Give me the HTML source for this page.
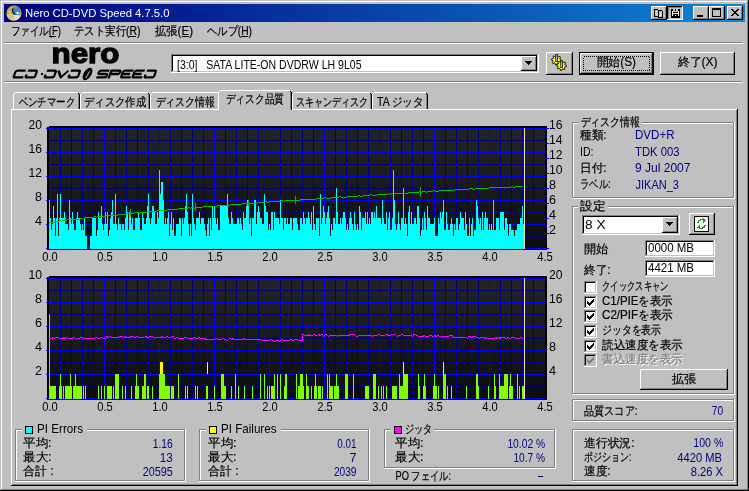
<!DOCTYPE html>
<html><head><meta charset="utf-8"><title>Nero CD-DVD Speed</title>
<style>
html,body{margin:0;padding:0;width:749px;height:491px;overflow:hidden;background:#c0c0c0;}
svg{display:block;font-family:"Liberation Sans",sans-serif;will-change:transform;}
text{white-space:pre;}
</style></head><body>
<svg width="749" height="491" viewBox="0 0 749 491" shape-rendering="crispEdges">
<rect x="0" y="0" width="749" height="491" fill="#c0c0c0"/>
<rect x="0" y="0" width="748" height="1" fill="#c0c0c0"/>
<rect x="0" y="0" width="1" height="490" fill="#c0c0c0"/>
<rect x="0" y="490" width="749" height="1" fill="#000000"/>
<rect x="748" y="0" width="1" height="491" fill="#000000"/>
<rect x="1" y="1" width="746" height="1" fill="#ffffff"/>
<rect x="1" y="1" width="1" height="488" fill="#ffffff"/>
<rect x="1" y="489" width="747" height="1" fill="#808080"/>
<rect x="747" y="1" width="1" height="489" fill="#808080"/>
<defs><linearGradient id="tg" x1="0" x2="1" y1="0" y2="0"><stop offset="0" stop-color="#000080"/><stop offset="1" stop-color="#1084d0"/></linearGradient></defs>
<rect x="4" y="4" width="741" height="18" fill="url(#tg)"/>
<g transform="translate(6,5)" shape-rendering="geometricPrecision"><circle cx="8" cy="8" r="7.6" fill="#c4a464"/><path d="M8 8.5 L0.6 9.5 A7.6 7.6 0 0 0 8 15.6 A7.6 7.6 0 0 0 14.5 11 Z" fill="#e8dcb0"/><path d="M8 8.5 L8 15.6 A7.6 7.6 0 0 1 0.6 9.5 Z" fill="#d8c488"/><circle cx="10.2" cy="6" r="4" fill="#2a88d8"/><path d="M8.2 3.2 Q10.5 2 12.5 3.5 L10 5 Z" fill="#30b030"/><path d="M7 8 Q9 9 11 9" stroke="#30a030" stroke-width="1" fill="none"/><circle cx="11.5" cy="8" r="1.2" fill="#fff"/><path d="M7.3 2.6 Q5.3 6.2 8.6 9.6" stroke="#000" stroke-width="1.1" fill="none"/><rect x="2.6" y="6.4" width="2.2" height="1.3" fill="#f8f800"/><rect x="6.2" y="2.2" width="1.2" height="1.2" fill="#f8f800"/></g>
<text x="25" y="16.5" font-size="11" fill="#ffffff" textLength="144.5" lengthAdjust="spacingAndGlyphs">Nero CD-DVD Speed 4.7.5.0</text>
<rect x="651" y="6" width="16" height="14" fill="#c0c0c0"/>
<rect x="651" y="6" width="15" height="1" fill="#ffffff"/>
<rect x="651" y="6" width="1" height="13" fill="#ffffff"/>
<rect x="651" y="19" width="16" height="1" fill="#000000"/>
<rect x="666" y="6" width="1" height="14" fill="#000000"/>
<rect x="652" y="7" width="13" height="1" fill="#c0c0c0"/>
<rect x="652" y="7" width="1" height="11" fill="#c0c0c0"/>
<rect x="652" y="18" width="14" height="1" fill="#808080"/>
<rect x="665" y="7" width="1" height="12" fill="#808080"/>
<rect x="667" y="6" width="16" height="14" fill="#c0c0c0"/>
<rect x="667" y="6" width="15" height="1" fill="#000000"/>
<rect x="667" y="6" width="1" height="13" fill="#000000"/>
<rect x="667" y="19" width="16" height="1" fill="#ffffff"/>
<rect x="682" y="6" width="1" height="14" fill="#ffffff"/>
<rect x="668" y="7" width="13" height="1" fill="#808080"/>
<rect x="668" y="7" width="1" height="11" fill="#808080"/>
<rect x="668" y="18" width="14" height="1" fill="#c0c0c0"/>
<rect x="681" y="7" width="1" height="12" fill="#c0c0c0"/>
<rect x="693" y="6" width="16" height="14" fill="#c0c0c0"/>
<rect x="693" y="6" width="15" height="1" fill="#ffffff"/>
<rect x="693" y="6" width="1" height="13" fill="#ffffff"/>
<rect x="693" y="19" width="16" height="1" fill="#000000"/>
<rect x="708" y="6" width="1" height="14" fill="#000000"/>
<rect x="694" y="7" width="13" height="1" fill="#c0c0c0"/>
<rect x="694" y="7" width="1" height="11" fill="#c0c0c0"/>
<rect x="694" y="18" width="14" height="1" fill="#808080"/>
<rect x="707" y="7" width="1" height="12" fill="#808080"/>
<rect x="709" y="6" width="16" height="14" fill="#c0c0c0"/>
<rect x="709" y="6" width="15" height="1" fill="#ffffff"/>
<rect x="709" y="6" width="1" height="13" fill="#ffffff"/>
<rect x="709" y="19" width="16" height="1" fill="#000000"/>
<rect x="724" y="6" width="1" height="14" fill="#000000"/>
<rect x="710" y="7" width="13" height="1" fill="#c0c0c0"/>
<rect x="710" y="7" width="1" height="11" fill="#c0c0c0"/>
<rect x="710" y="18" width="14" height="1" fill="#808080"/>
<rect x="723" y="7" width="1" height="12" fill="#808080"/>
<rect x="727" y="6" width="16" height="14" fill="#c0c0c0"/>
<rect x="727" y="6" width="15" height="1" fill="#ffffff"/>
<rect x="727" y="6" width="1" height="13" fill="#ffffff"/>
<rect x="727" y="19" width="16" height="1" fill="#000000"/>
<rect x="742" y="6" width="1" height="14" fill="#000000"/>
<rect x="728" y="7" width="13" height="1" fill="#c0c0c0"/>
<rect x="728" y="7" width="1" height="11" fill="#c0c0c0"/>
<rect x="728" y="18" width="14" height="1" fill="#808080"/>
<rect x="741" y="7" width="1" height="12" fill="#808080"/>
<rect x="697" y="15" width="6" height="2" fill="#000000"/>
<rect x="712" y="8" width="9" height="2" fill="#000000"/>
<rect x="712" y="10" width="1" height="7" fill="#000000"/>
<rect x="720" y="10" width="1" height="7" fill="#000000"/>
<rect x="712" y="16" width="9" height="1" fill="#000000"/>
<rect x="731" y="9" width="1" height="1" fill="#000000"/>
<rect x="732" y="9" width="1" height="1" fill="#000000"/>
<rect x="737" y="9" width="1" height="1" fill="#000000"/>
<rect x="738" y="9" width="1" height="1" fill="#000000"/>
<rect x="732" y="10" width="1" height="1" fill="#000000"/>
<rect x="733" y="10" width="1" height="1" fill="#000000"/>
<rect x="736" y="10" width="1" height="1" fill="#000000"/>
<rect x="737" y="10" width="1" height="1" fill="#000000"/>
<rect x="733" y="11" width="1" height="1" fill="#000000"/>
<rect x="734" y="11" width="1" height="1" fill="#000000"/>
<rect x="735" y="11" width="1" height="1" fill="#000000"/>
<rect x="736" y="11" width="1" height="1" fill="#000000"/>
<rect x="734" y="12" width="1" height="1" fill="#000000"/>
<rect x="735" y="12" width="1" height="1" fill="#000000"/>
<rect x="733" y="13" width="1" height="1" fill="#000000"/>
<rect x="734" y="13" width="1" height="1" fill="#000000"/>
<rect x="735" y="13" width="1" height="1" fill="#000000"/>
<rect x="736" y="13" width="1" height="1" fill="#000000"/>
<rect x="732" y="14" width="1" height="1" fill="#000000"/>
<rect x="733" y="14" width="1" height="1" fill="#000000"/>
<rect x="736" y="14" width="1" height="1" fill="#000000"/>
<rect x="737" y="14" width="1" height="1" fill="#000000"/>
<rect x="731" y="15" width="1" height="1" fill="#000000"/>
<rect x="732" y="15" width="1" height="1" fill="#000000"/>
<rect x="737" y="15" width="1" height="1" fill="#000000"/>
<rect x="738" y="15" width="1" height="1" fill="#000000"/>
<path d="M654.5 9.5h3l1 1v6h-4z" fill="#c0c0c0" stroke="#000" stroke-width="1"/><path d="M658.5 10.5h3l1 1v5.5h-4z" fill="#c0c0c0" stroke="#000" stroke-width="1"/>
<rect x="656" y="11" width="1" height="1" fill="#ffffff"/>
<rect x="656" y="14" width="1" height="1" fill="#ffffff"/>
<rect x="660" y="13" width="1" height="1" fill="#ffffff"/>
<rect x="660" y="15" width="1" height="1" fill="#ffffff"/>
<rect x="671" y="9" width="9" height="9" fill="#000000"/>
<rect x="673" y="9" width="5" height="3" fill="#c0c0c0"/>
<rect x="675" y="9" width="1" height="2" fill="#000000"/>
<rect x="672" y="11" width="1" height="5" fill="#ffffff"/>
<rect x="678" y="11" width="1" height="5" fill="#ffffff"/>
<rect x="673" y="13" width="5" height="1" fill="#ffffff"/>
<rect x="675" y="15" width="1" height="1" fill="#ffffff"/>
<text x="10.5" y="35.4" font-size="12" fill="#000000" stroke="#000000" stroke-width="0.2" textLength="50.5" lengthAdjust="spacingAndGlyphs">ファイル(F)</text>
<text x="74" y="35.4" font-size="12" fill="#000000" stroke="#000000" stroke-width="0.2" textLength="66.5" lengthAdjust="spacingAndGlyphs">テスト実行(R)</text>
<text x="154.5" y="35.4" font-size="12" fill="#000000" stroke="#000000" stroke-width="0.2" textLength="38.5" lengthAdjust="spacingAndGlyphs">拡張(E)</text>
<text x="207" y="35.4" font-size="12" fill="#000000" stroke="#000000" stroke-width="0.2" textLength="45.0" lengthAdjust="spacingAndGlyphs">ヘルプ(H)</text>
<rect x="4" y="42" width="738" height="1" fill="#808080"/>
<rect x="4" y="43" width="739" height="1" fill="#ffffff"/>
<rect x="49" y="36" width="7" height="1" fill="#000000"/>
<rect x="129" y="36" width="7" height="1" fill="#000000"/>
<rect x="182" y="36" width="7" height="1" fill="#000000"/>
<rect x="241" y="36" width="7" height="1" fill="#000000"/>
<rect x="625" y="68" width="7" height="1" fill="#000000"/>
<rect x="706" y="68" width="7" height="1" fill="#000000"/>
<rect x="4" y="81" width="738" height="1" fill="#808080"/>
<rect x="4" y="82" width="739" height="1" fill="#ffffff"/>
<text x="51.5" y="62.6" font-size="28.5" font-weight="bold" font-family="Liberation Sans" fill="#000" stroke="#000" stroke-width="1.3" textLength="68" lengthAdjust="spacingAndGlyphs">nero</text>
<path transform="translate(15.2,69.5) skewX(-20)" d="M11 1.1H2.6Q1.1 1.1 1.1 2.6V6.4Q1.1 7.9 2.6 7.9H11" fill="none" stroke="#000" stroke-width="2.3" stroke-linejoin="round" shape-rendering="geometricPrecision"/>
<path transform="translate(27.2,69.5) skewX(-20)" d="M1.1 1.1H8.9Q10.4 1.1 10.4 2.6V6.4Q10.4 7.9 8.9 7.9H1.1M1.1 5V7.9" fill="none" stroke="#000" stroke-width="2.3" stroke-linejoin="round" shape-rendering="geometricPrecision"/>
<path transform="translate(46.2,69.5) skewX(-20)" d="M1.1 1.1H8.9Q10.4 1.1 10.4 2.6V6.4Q10.4 7.9 8.9 7.9H1.1M1.1 5V7.9" fill="none" stroke="#000" stroke-width="2.3" stroke-linejoin="round" shape-rendering="geometricPrecision"/>
<path transform="translate(58.2,69.5) skewX(-20)" d="M0.6 1.1L5.6 7.9L10.6 1.1" fill="none" stroke="#000" stroke-width="2.3" stroke-linejoin="round" shape-rendering="geometricPrecision"/>
<path transform="translate(70.2,69.5) skewX(-20)" d="M1.1 1.1H8.9Q10.4 1.1 10.4 2.6V6.4Q10.4 7.9 8.9 7.9H1.1M1.1 5V7.9" fill="none" stroke="#000" stroke-width="2.3" stroke-linejoin="round" shape-rendering="geometricPrecision"/>
<path transform="translate(98.7,69.5) skewX(-20)" d="M11 1.1H2.6Q1.1 1.1 1.1 2.6V3Q1.1 4.5 2.6 4.5H8.9Q10.4 4.5 10.4 6V6.4Q10.4 7.9 8.9 7.9H0.5" fill="none" stroke="#000" stroke-width="2.3" stroke-linejoin="round" shape-rendering="geometricPrecision"/>
<path transform="translate(110.7,69.5) skewX(-20)" d="M1.1 9V1.1H8.9Q10.4 1.1 10.4 2.6V3Q10.4 4.5 8.9 4.5H1.1" fill="none" stroke="#000" stroke-width="2.3" stroke-linejoin="round" shape-rendering="geometricPrecision"/>
<path transform="translate(122.7,69.5) skewX(-20)" d="M11 1.1H2.6Q1.1 1.1 1.1 2.6V6.4Q1.1 7.9 2.6 7.9H11M1.1 4.5H9" fill="none" stroke="#000" stroke-width="2.3" stroke-linejoin="round" shape-rendering="geometricPrecision"/>
<path transform="translate(134.2,69.5) skewX(-20)" d="M11 1.1H2.6Q1.1 1.1 1.1 2.6V6.4Q1.1 7.9 2.6 7.9H11M1.1 4.5H9" fill="none" stroke="#000" stroke-width="2.3" stroke-linejoin="round" shape-rendering="geometricPrecision"/>
<path transform="translate(146.2,69.5) skewX(-20)" d="M1.1 1.1H8.9Q10.4 1.1 10.4 2.6V6.4Q10.4 7.9 8.9 7.9H1.1M1.1 5V7.9" fill="none" stroke="#000" stroke-width="2.3" stroke-linejoin="round" shape-rendering="geometricPrecision"/>
<rect x="40.5" y="73" width="2" height="2" fill="#000"/>
<g transform="translate(87.5,74) rotate(-58)" shape-rendering="geometricPrecision"><ellipse cx="0" cy="0" rx="7" ry="3.8" fill="#000"/><path d="M-4.5 0.5H3.5" stroke="#c0c0c0" stroke-width="0.9"/></g>
<rect x="171" y="54" width="368" height="19" fill="#ffffff"/>
<rect x="171" y="54" width="367" height="1" fill="#808080"/>
<rect x="171" y="54" width="1" height="18" fill="#808080"/>
<rect x="171" y="72" width="368" height="1" fill="#ffffff"/>
<rect x="538" y="54" width="1" height="19" fill="#ffffff"/>
<rect x="172" y="55" width="365" height="1" fill="#000000"/>
<rect x="172" y="55" width="1" height="16" fill="#000000"/>
<rect x="172" y="71" width="366" height="1" fill="#c0c0c0"/>
<rect x="537" y="55" width="1" height="17" fill="#c0c0c0"/>
<rect x="521" y="56" width="16" height="15" fill="#c0c0c0"/>
<rect x="521" y="56" width="15" height="1" fill="#ffffff"/>
<rect x="521" y="56" width="1" height="14" fill="#ffffff"/>
<rect x="521" y="70" width="16" height="1" fill="#000000"/>
<rect x="536" y="56" width="1" height="15" fill="#000000"/>
<rect x="522" y="57" width="13" height="1" fill="#c0c0c0"/>
<rect x="522" y="57" width="1" height="12" fill="#c0c0c0"/>
<rect x="522" y="69" width="14" height="1" fill="#808080"/>
<rect x="535" y="57" width="1" height="13" fill="#808080"/>
<rect x="525" y="61" width="7" height="1" fill="#000000"/>
<rect x="526" y="62" width="5" height="1" fill="#000000"/>
<rect x="527" y="63" width="3" height="1" fill="#000000"/>
<rect x="528" y="64" width="1" height="1" fill="#000000"/>
<text x="177" y="69" font-size="12.7" fill="#000000" textLength="184.5" lengthAdjust="spacingAndGlyphs">[3:0]   SATA LITE-ON DVDRW LH 9L05</text>
<rect x="546" y="52" width="27" height="23" fill="#c0c0c0"/>
<rect x="546" y="52" width="26" height="1" fill="#ffffff"/>
<rect x="546" y="52" width="1" height="22" fill="#ffffff"/>
<rect x="546" y="74" width="27" height="1" fill="#000000"/>
<rect x="572" y="52" width="1" height="23" fill="#000000"/>
<rect x="547" y="53" width="24" height="1" fill="#c0c0c0"/>
<rect x="547" y="53" width="1" height="20" fill="#c0c0c0"/>
<rect x="547" y="73" width="25" height="1" fill="#808080"/>
<rect x="571" y="53" width="1" height="21" fill="#808080"/>
<g><polygon points="556.50,55.00 557.48,55.10 557.88,56.67 558.50,57.01 560.04,56.46 560.66,57.22 559.83,58.62 560.03,59.30 561.50,60.00 561.40,60.98 559.83,61.38 559.49,62.00 560.04,63.54 559.28,64.16 557.88,63.33 557.20,63.53 556.50,65.00 555.52,64.90 555.12,63.33 554.50,62.99 552.96,63.54 552.34,62.78 553.17,61.38 552.97,60.70 551.50,60.00 551.60,59.02 553.17,58.62 553.51,58.00 552.96,56.46 553.72,55.84 555.12,56.67 555.80,56.47" fill="#ffff00" stroke="#000" stroke-width="0.9" shape-rendering="geometricPrecision"/><polygon points="561.50,60.50 562.48,60.60 562.88,62.17 563.50,62.51 565.04,61.96 565.66,62.72 564.83,64.12 565.03,64.80 566.50,65.50 566.40,66.48 564.83,66.88 564.49,67.50 565.04,69.04 564.28,69.66 562.88,68.83 562.20,69.03 561.50,70.50 560.52,70.40 560.12,68.83 559.50,68.49 557.96,69.04 557.34,68.28 558.17,66.88 557.97,66.20 556.50,65.50 556.60,64.52 558.17,64.12 558.51,63.50 557.96,61.96 558.72,61.34 560.12,62.17 560.80,61.97" fill="#ffff00" stroke="#000" stroke-width="0.9" shape-rendering="geometricPrecision"/><rect x="555.5" y="54.5" width="2" height="7" fill="#a0a0c0" stroke="#000" stroke-width="0.6"/><rect x="560.5" y="60" width="2" height="7" fill="#a0a0c0" stroke="#000" stroke-width="0.6"/></g>
<rect x="579" y="52" width="75" height="1" fill="#000000"/>
<rect x="579" y="74" width="75" height="1" fill="#000000"/>
<rect x="579" y="52" width="1" height="23" fill="#000000"/>
<rect x="653" y="52" width="1" height="23" fill="#000000"/>
<rect x="580" y="53" width="73" height="21" fill="#c0c0c0"/>
<rect x="580" y="53" width="72" height="1" fill="#ffffff"/>
<rect x="580" y="53" width="1" height="20" fill="#ffffff"/>
<rect x="580" y="73" width="73" height="1" fill="#000000"/>
<rect x="652" y="53" width="1" height="21" fill="#000000"/>
<rect x="581" y="54" width="70" height="1" fill="#c0c0c0"/>
<rect x="581" y="54" width="1" height="18" fill="#c0c0c0"/>
<rect x="581" y="72" width="71" height="1" fill="#808080"/>
<rect x="651" y="54" width="1" height="19" fill="#808080"/>
<rect x="583.5" y="56.5" width="66" height="14" fill="none" stroke="#000" stroke-width="1" stroke-dasharray="1 1"/>
<text x="596.5" y="66.4" font-size="12" fill="#000000" stroke="#000000" stroke-width="0.2" textLength="39.5" lengthAdjust="spacingAndGlyphs">開始(S)</text>
<rect x="660" y="52" width="75" height="23" fill="#c0c0c0"/>
<rect x="660" y="52" width="74" height="1" fill="#ffffff"/>
<rect x="660" y="52" width="1" height="22" fill="#ffffff"/>
<rect x="660" y="74" width="75" height="1" fill="#000000"/>
<rect x="734" y="52" width="1" height="23" fill="#000000"/>
<rect x="661" y="53" width="72" height="1" fill="#c0c0c0"/>
<rect x="661" y="53" width="1" height="20" fill="#c0c0c0"/>
<rect x="661" y="73" width="73" height="1" fill="#808080"/>
<rect x="733" y="53" width="1" height="21" fill="#808080"/>
<text x="677.5" y="66.4" font-size="12" fill="#000000" stroke="#000000" stroke-width="0.2" textLength="40.0" lengthAdjust="spacingAndGlyphs">終了(X)</text>
<rect x="11" y="109" width="726" height="1" fill="#ffffff"/>
<rect x="11" y="109" width="1" height="376" fill="#ffffff"/>
<rect x="736" y="110" width="1" height="375" fill="#808080"/>
<rect x="737" y="109" width="1" height="377" fill="#000000"/>
<rect x="12" y="484" width="725" height="1" fill="#808080"/>
<rect x="11" y="485" width="727" height="1" fill="#000000"/>
<rect x="15" y="92" width="63" height="1" fill="#ffffff"/>
<rect x="14" y="93" width="1" height="1" fill="#ffffff"/>
<rect x="13" y="94" width="1" height="15" fill="#ffffff"/>
<rect x="78" y="93" width="1" height="1" fill="#000000"/>
<rect x="78" y="94" width="1" height="15" fill="#808080"/>
<rect x="79" y="94" width="1" height="15" fill="#000000"/>
<rect x="82" y="92" width="66" height="1" fill="#ffffff"/>
<rect x="81" y="93" width="1" height="1" fill="#ffffff"/>
<rect x="80" y="94" width="1" height="15" fill="#ffffff"/>
<rect x="148" y="93" width="1" height="1" fill="#000000"/>
<rect x="148" y="94" width="1" height="15" fill="#808080"/>
<rect x="149" y="94" width="1" height="15" fill="#000000"/>
<rect x="152" y="92" width="68" height="1" fill="#ffffff"/>
<rect x="151" y="93" width="1" height="1" fill="#ffffff"/>
<rect x="150" y="94" width="1" height="15" fill="#ffffff"/>
<rect x="220" y="93" width="1" height="1" fill="#000000"/>
<rect x="220" y="94" width="1" height="15" fill="#808080"/>
<rect x="221" y="94" width="1" height="15" fill="#000000"/>
<rect x="294" y="92" width="76" height="1" fill="#ffffff"/>
<rect x="293" y="93" width="1" height="1" fill="#ffffff"/>
<rect x="292" y="94" width="1" height="15" fill="#ffffff"/>
<rect x="370" y="93" width="1" height="1" fill="#000000"/>
<rect x="370" y="94" width="1" height="15" fill="#808080"/>
<rect x="371" y="94" width="1" height="15" fill="#000000"/>
<rect x="374" y="92" width="52" height="1" fill="#ffffff"/>
<rect x="373" y="93" width="1" height="1" fill="#ffffff"/>
<rect x="372" y="94" width="1" height="15" fill="#ffffff"/>
<rect x="426" y="93" width="1" height="1" fill="#000000"/>
<rect x="426" y="94" width="1" height="15" fill="#808080"/>
<rect x="427" y="94" width="1" height="15" fill="#000000"/>
<rect x="218" y="90" width="74" height="20" fill="#c0c0c0"/>
<rect x="220" y="90" width="70" height="1" fill="#ffffff"/>
<rect x="219" y="91" width="1" height="1" fill="#ffffff"/>
<rect x="218" y="92" width="1" height="18" fill="#ffffff"/>
<rect x="290" y="91" width="1" height="1" fill="#000000"/>
<rect x="290" y="92" width="1" height="18" fill="#808080"/>
<rect x="291" y="92" width="1" height="18" fill="#000000"/>
<rect x="219" y="109" width="72" height="1" fill="#c0c0c0"/>
<text x="18.5" y="106.4" font-size="12" fill="#000000" stroke="#000000" stroke-width="0.2" textLength="56.5" lengthAdjust="spacingAndGlyphs">ベンチマーク</text>
<text x="84" y="106.4" font-size="12" fill="#000000" stroke="#000000" stroke-width="0.2" textLength="62.0" lengthAdjust="spacingAndGlyphs">ディスク作成</text>
<text x="155.5" y="106.4" font-size="12" fill="#000000" stroke="#000000" stroke-width="0.2" textLength="59.5" lengthAdjust="spacingAndGlyphs">ディスク情報</text>
<text x="225.5" y="103.4" font-size="12" fill="#000000" stroke="#000000" stroke-width="0.2" textLength="58.5" lengthAdjust="spacingAndGlyphs">ディスク品質</text>
<text x="296" y="106.4" font-size="12" fill="#000000" stroke="#000000" stroke-width="0.2" textLength="72.5" lengthAdjust="spacingAndGlyphs">スキャンディスク</text>
<text x="377" y="106.4" font-size="12" fill="#000000" stroke="#000000" stroke-width="0.2" textLength="46.5" lengthAdjust="spacingAndGlyphs">TA ジッタ</text>
<defs><linearGradient id="bg128" gradientUnits="userSpaceOnUse" x1="0" x2="0" y1="128" y2="248"><stop offset="0" stop-color="#242424"/><stop offset="0.5" stop-color="#1a1a1a"/><stop offset="1" stop-color="#0c0c0c"/></linearGradient></defs>
<rect x="47" y="126" width="500" height="124" fill="#000"/>
<rect x="49" y="128" width="496" height="120" fill="url(#bg128)"/>
<rect x="47" y="126" width="2" height="1" fill="#c0c0c0"/>
<rect x="60" y="128" width="1" height="121" fill="#000080"/>
<rect x="71" y="128" width="1" height="121" fill="#000080"/>
<rect x="82" y="128" width="1" height="121" fill="#000080"/>
<rect x="93" y="128" width="1" height="121" fill="#000080"/>
<rect x="104" y="128" width="1" height="121" fill="#0000ff"/>
<rect x="115" y="128" width="1" height="121" fill="#000080"/>
<rect x="126" y="128" width="1" height="121" fill="#000080"/>
<rect x="137" y="128" width="1" height="121" fill="#000080"/>
<rect x="148" y="128" width="1" height="121" fill="#000080"/>
<rect x="159" y="128" width="1" height="121" fill="#0000ff"/>
<rect x="170" y="128" width="1" height="121" fill="#000080"/>
<rect x="181" y="128" width="1" height="121" fill="#000080"/>
<rect x="192" y="128" width="1" height="121" fill="#000080"/>
<rect x="203" y="128" width="1" height="121" fill="#000080"/>
<rect x="214" y="128" width="1" height="121" fill="#0000ff"/>
<rect x="225" y="128" width="1" height="121" fill="#000080"/>
<rect x="236" y="128" width="1" height="121" fill="#000080"/>
<rect x="247" y="128" width="1" height="121" fill="#000080"/>
<rect x="258" y="128" width="1" height="121" fill="#000080"/>
<rect x="269" y="128" width="1" height="121" fill="#0000ff"/>
<rect x="280" y="128" width="1" height="121" fill="#000080"/>
<rect x="291" y="128" width="1" height="121" fill="#000080"/>
<rect x="302" y="128" width="1" height="121" fill="#000080"/>
<rect x="313" y="128" width="1" height="121" fill="#000080"/>
<rect x="324" y="128" width="1" height="121" fill="#0000ff"/>
<rect x="335" y="128" width="1" height="121" fill="#000080"/>
<rect x="346" y="128" width="1" height="121" fill="#000080"/>
<rect x="357" y="128" width="1" height="121" fill="#000080"/>
<rect x="368" y="128" width="1" height="121" fill="#000080"/>
<rect x="379" y="128" width="1" height="121" fill="#0000ff"/>
<rect x="390" y="128" width="1" height="121" fill="#000080"/>
<rect x="401" y="128" width="1" height="121" fill="#000080"/>
<rect x="412" y="128" width="1" height="121" fill="#000080"/>
<rect x="423" y="128" width="1" height="121" fill="#000080"/>
<rect x="434" y="128" width="1" height="121" fill="#0000ff"/>
<rect x="445" y="128" width="1" height="121" fill="#000080"/>
<rect x="456" y="128" width="1" height="121" fill="#000080"/>
<rect x="467" y="128" width="1" height="121" fill="#000080"/>
<rect x="478" y="128" width="1" height="121" fill="#000080"/>
<rect x="489" y="128" width="1" height="121" fill="#0000ff"/>
<rect x="500" y="128" width="1" height="121" fill="#000080"/>
<rect x="511" y="128" width="1" height="121" fill="#000080"/>
<rect x="522" y="128" width="1" height="121" fill="#000080"/>
<rect x="533" y="128" width="1" height="121" fill="#000080"/>
<rect x="46" y="128" width="499" height="1" fill="#0000ff"/>
<rect x="49" y="140" width="496" height="1" fill="#000080"/>
<rect x="46" y="152" width="499" height="1" fill="#0000ff"/>
<rect x="49" y="164" width="496" height="1" fill="#000080"/>
<rect x="46" y="176" width="499" height="1" fill="#0000ff"/>
<rect x="49" y="188" width="496" height="1" fill="#000080"/>
<rect x="46" y="200" width="499" height="1" fill="#0000ff"/>
<rect x="49" y="212" width="496" height="1" fill="#000080"/>
<rect x="46" y="224" width="499" height="1" fill="#0000ff"/>
<rect x="49" y="236" width="496" height="1" fill="#000080"/>
<rect x="46" y="248" width="499" height="1" fill="#0000ff"/>
<path d="M49 200h1v49h-1zM50 218h1v31h-1zM51 230h1v19h-1zM52 224h1v25h-1zM53 206h1v43h-1zM54 218h1v31h-1zM55 236h1v13h-1zM56 218h1v31h-1zM57 194h1v55h-1zM58 236h1v13h-1zM59 218h1v31h-1zM60 194h1v55h-1zM61 218h1v31h-1zM62 218h1v31h-1zM63 218h1v31h-1zM64 212h1v37h-1zM65 224h1v25h-1zM66 224h1v25h-1zM67 224h1v25h-1zM68 230h1v19h-1zM69 200h1v49h-1zM70 218h1v31h-1zM71 224h1v25h-1zM72 212h1v37h-1zM73 224h1v25h-1zM74 230h1v19h-1zM75 230h1v19h-1zM76 218h1v31h-1zM77 212h1v37h-1zM78 218h1v31h-1zM79 218h1v31h-1zM80 224h1v25h-1zM81 230h1v19h-1zM82 224h1v25h-1zM83 230h1v19h-1zM84 218h1v31h-1zM85 236h1v13h-1zM86 236h1v13h-1zM90 236h1v13h-1zM91 236h1v13h-1zM92 218h1v31h-1zM93 218h1v31h-1zM94 218h1v31h-1zM95 218h1v31h-1zM96 236h1v13h-1zM97 230h1v19h-1zM98 212h1v37h-1zM99 218h1v31h-1zM100 218h1v31h-1zM101 206h1v43h-1zM102 224h1v25h-1zM103 230h1v19h-1zM104 224h1v25h-1zM105 212h1v37h-1zM106 224h1v25h-1zM107 212h1v37h-1zM108 236h1v13h-1zM109 230h1v19h-1zM110 218h1v31h-1zM111 212h1v37h-1zM112 200h1v49h-1zM113 224h1v25h-1zM114 224h1v25h-1zM115 194h1v55h-1zM116 224h1v25h-1zM117 230h1v19h-1zM118 218h1v31h-1zM119 224h1v25h-1zM120 224h1v25h-1zM121 230h1v19h-1zM122 224h1v25h-1zM123 224h1v25h-1zM124 230h1v19h-1zM125 218h1v31h-1zM126 206h1v43h-1zM127 212h1v37h-1zM128 230h1v19h-1zM129 212h1v37h-1zM130 212h1v37h-1zM131 224h1v25h-1zM132 218h1v31h-1zM133 230h1v19h-1zM134 230h1v19h-1zM135 218h1v31h-1zM136 218h1v31h-1zM137 218h1v31h-1zM138 212h1v37h-1zM139 218h1v31h-1zM140 230h1v19h-1zM141 230h1v19h-1zM142 212h1v37h-1zM143 218h1v31h-1zM144 224h1v25h-1zM145 224h1v25h-1zM146 218h1v31h-1zM147 206h1v43h-1zM148 194h1v55h-1zM149 218h1v31h-1zM150 224h1v25h-1zM151 218h1v31h-1zM152 206h1v43h-1zM153 206h1v43h-1zM154 212h1v37h-1zM155 224h1v25h-1zM156 224h1v25h-1zM157 212h1v37h-1zM158 218h1v31h-1zM159 170h1v79h-1zM160 194h1v55h-1zM161 182h1v67h-1zM162 182h1v67h-1zM163 200h1v49h-1zM164 224h1v25h-1zM165 218h1v31h-1zM166 224h1v25h-1zM167 218h1v31h-1zM168 212h1v37h-1zM169 236h1v13h-1zM170 224h1v25h-1zM171 212h1v37h-1zM172 230h1v19h-1zM173 218h1v31h-1zM174 236h1v13h-1zM175 236h1v13h-1zM176 224h1v25h-1zM177 224h1v25h-1zM178 224h1v25h-1zM179 218h1v31h-1zM180 218h1v31h-1zM181 236h1v13h-1zM182 218h1v31h-1zM183 224h1v25h-1zM184 218h1v31h-1zM185 206h1v43h-1zM186 194h1v55h-1zM187 212h1v37h-1zM188 224h1v25h-1zM189 236h1v13h-1zM190 224h1v25h-1zM191 236h1v13h-1zM192 194h1v55h-1zM193 218h1v31h-1zM194 224h1v25h-1zM195 230h1v19h-1zM196 218h1v31h-1zM197 218h1v31h-1zM198 218h1v31h-1zM199 212h1v37h-1zM200 224h1v25h-1zM201 218h1v31h-1zM202 218h1v31h-1zM203 218h1v31h-1zM204 224h1v25h-1zM205 230h1v19h-1zM206 236h1v13h-1zM207 224h1v25h-1zM208 218h1v31h-1zM209 236h1v13h-1zM210 218h1v31h-1zM211 230h1v19h-1zM212 206h1v43h-1zM213 218h1v31h-1zM214 206h1v43h-1zM215 218h1v31h-1zM216 224h1v25h-1zM217 218h1v31h-1zM218 230h1v19h-1zM219 230h1v19h-1zM220 206h1v43h-1zM221 206h1v43h-1zM222 206h1v43h-1zM223 206h1v43h-1zM224 206h1v43h-1zM225 206h1v43h-1zM226 206h1v43h-1zM227 194h1v55h-1zM228 218h1v31h-1zM229 224h1v25h-1zM230 224h1v25h-1zM231 212h1v37h-1zM232 218h1v31h-1zM233 224h1v25h-1zM234 224h1v25h-1zM235 224h1v25h-1zM236 224h1v25h-1zM237 218h1v31h-1zM238 218h1v31h-1zM239 224h1v25h-1zM240 218h1v31h-1zM241 224h1v25h-1zM242 230h1v19h-1zM243 212h1v37h-1zM244 218h1v31h-1zM245 218h1v31h-1zM246 206h1v43h-1zM247 200h1v49h-1zM248 206h1v43h-1zM249 224h1v25h-1zM250 218h1v31h-1zM251 236h1v13h-1zM252 218h1v31h-1zM253 218h1v31h-1zM254 200h1v49h-1zM255 200h1v49h-1zM256 224h1v25h-1zM257 212h1v37h-1zM258 206h1v43h-1zM259 212h1v37h-1zM260 218h1v31h-1zM261 218h1v31h-1zM262 224h1v25h-1zM263 224h1v25h-1zM264 194h1v55h-1zM265 206h1v43h-1zM266 212h1v37h-1zM267 212h1v37h-1zM268 230h1v19h-1zM269 224h1v25h-1zM270 230h1v19h-1zM271 212h1v37h-1zM272 212h1v37h-1zM273 230h1v19h-1zM274 212h1v37h-1zM275 218h1v31h-1zM276 218h1v31h-1zM277 218h1v31h-1zM278 218h1v31h-1zM279 224h1v25h-1zM280 200h1v49h-1zM281 218h1v31h-1zM282 218h1v31h-1zM283 230h1v19h-1zM284 218h1v31h-1zM285 218h1v31h-1zM286 224h1v25h-1zM287 218h1v31h-1zM288 224h1v25h-1zM289 224h1v25h-1zM290 218h1v31h-1zM291 218h1v31h-1zM292 230h1v19h-1zM293 218h1v31h-1zM294 218h1v31h-1zM295 218h1v31h-1zM296 218h1v31h-1zM297 224h1v25h-1zM298 230h1v19h-1zM299 230h1v19h-1zM300 218h1v31h-1zM301 218h1v31h-1zM302 224h1v25h-1zM303 212h1v37h-1zM304 218h1v31h-1zM305 224h1v25h-1zM306 218h1v31h-1zM307 218h1v31h-1zM308 212h1v37h-1zM309 218h1v31h-1zM310 224h1v25h-1zM311 212h1v37h-1zM312 230h1v19h-1zM313 206h1v43h-1zM314 224h1v25h-1zM315 230h1v19h-1zM316 218h1v31h-1zM317 218h1v31h-1zM318 218h1v31h-1zM319 236h1v13h-1zM320 194h1v55h-1zM321 224h1v25h-1zM322 218h1v31h-1zM323 206h1v43h-1zM324 212h1v37h-1zM325 224h1v25h-1zM326 218h1v31h-1zM327 212h1v37h-1zM328 206h1v43h-1zM329 218h1v31h-1zM330 236h1v13h-1zM331 224h1v25h-1zM332 230h1v19h-1zM333 218h1v31h-1zM334 218h1v31h-1zM335 224h1v25h-1zM336 188h1v61h-1zM337 212h1v37h-1zM338 224h1v25h-1zM339 224h1v25h-1zM340 218h1v31h-1zM341 224h1v25h-1zM342 218h1v31h-1zM343 212h1v37h-1zM344 212h1v37h-1zM345 218h1v31h-1zM346 230h1v19h-1zM347 224h1v25h-1zM348 230h1v19h-1zM349 218h1v31h-1zM350 212h1v37h-1zM351 218h1v31h-1zM352 224h1v25h-1zM353 230h1v19h-1zM354 212h1v37h-1zM355 224h1v25h-1zM356 230h1v19h-1zM357 224h1v25h-1zM358 230h1v19h-1zM359 206h1v43h-1zM360 212h1v37h-1zM361 230h1v19h-1zM362 218h1v31h-1zM363 218h1v31h-1zM364 218h1v31h-1zM365 212h1v37h-1zM366 224h1v25h-1zM367 212h1v37h-1zM368 224h1v25h-1zM369 218h1v31h-1zM370 224h1v25h-1zM371 212h1v37h-1zM372 212h1v37h-1zM373 218h1v31h-1zM374 212h1v37h-1zM375 218h1v31h-1zM376 206h1v43h-1zM377 218h1v31h-1zM378 218h1v31h-1zM379 218h1v31h-1zM380 218h1v31h-1zM381 224h1v25h-1zM382 200h1v49h-1zM383 218h1v31h-1zM384 224h1v25h-1zM385 224h1v25h-1zM386 212h1v37h-1zM387 230h1v19h-1zM388 218h1v31h-1zM389 212h1v37h-1zM390 230h1v19h-1zM391 230h1v19h-1zM392 218h1v31h-1zM393 170h1v79h-1zM394 200h1v49h-1zM395 224h1v25h-1zM396 230h1v19h-1zM397 224h1v25h-1zM398 212h1v37h-1zM399 224h1v25h-1zM400 230h1v19h-1zM401 218h1v31h-1zM402 218h1v31h-1zM403 188h1v61h-1zM404 224h1v25h-1zM405 218h1v31h-1zM406 224h1v25h-1zM407 236h1v13h-1zM408 212h1v37h-1zM409 206h1v43h-1zM410 224h1v25h-1zM411 212h1v37h-1zM412 224h1v25h-1zM413 224h1v25h-1zM414 218h1v31h-1zM415 218h1v31h-1zM416 224h1v25h-1zM417 206h1v43h-1zM418 206h1v43h-1zM419 218h1v31h-1zM420 236h1v13h-1zM421 230h1v19h-1zM422 218h1v31h-1zM423 230h1v19h-1zM424 212h1v37h-1zM425 218h1v31h-1zM426 230h1v19h-1zM427 206h1v43h-1zM428 218h1v31h-1zM429 218h1v31h-1zM430 224h1v25h-1zM431 224h1v25h-1zM432 224h1v25h-1zM433 224h1v25h-1zM434 218h1v31h-1zM435 236h1v13h-1zM436 236h1v13h-1zM437 236h1v13h-1zM438 218h1v31h-1zM439 224h1v25h-1zM440 212h1v37h-1zM441 218h1v31h-1zM442 212h1v37h-1zM443 200h1v49h-1zM444 230h1v19h-1zM445 230h1v19h-1zM446 212h1v37h-1zM447 224h1v25h-1zM448 230h1v19h-1zM449 230h1v19h-1zM450 224h1v25h-1zM451 218h1v31h-1zM452 224h1v25h-1zM453 236h1v13h-1zM454 224h1v25h-1zM455 230h1v19h-1zM456 218h1v31h-1zM457 218h1v31h-1zM458 230h1v19h-1zM459 224h1v25h-1zM460 212h1v37h-1zM461 218h1v31h-1zM462 218h1v31h-1zM463 218h1v31h-1zM464 230h1v19h-1zM465 212h1v37h-1zM466 224h1v25h-1zM467 236h1v13h-1zM468 236h1v13h-1zM469 218h1v31h-1zM470 236h1v13h-1zM471 224h1v25h-1zM472 218h1v31h-1zM473 236h1v13h-1zM474 230h1v19h-1zM475 230h1v19h-1zM476 200h1v49h-1zM477 206h1v43h-1zM478 218h1v31h-1zM479 224h1v25h-1zM480 218h1v31h-1zM481 230h1v19h-1zM482 212h1v37h-1zM483 230h1v19h-1zM484 218h1v31h-1zM485 212h1v37h-1zM486 218h1v31h-1zM487 218h1v31h-1zM488 230h1v19h-1zM489 224h1v25h-1zM490 230h1v19h-1zM491 224h1v25h-1zM492 230h1v19h-1zM493 200h1v49h-1zM494 230h1v19h-1zM495 230h1v19h-1zM496 218h1v31h-1zM497 218h1v31h-1zM498 218h1v31h-1zM499 230h1v19h-1zM500 212h1v37h-1zM501 212h1v37h-1zM502 212h1v37h-1zM503 212h1v37h-1zM504 230h1v19h-1zM505 218h1v31h-1zM506 218h1v31h-1zM507 224h1v25h-1zM508 236h1v13h-1zM509 224h1v25h-1zM510 224h1v25h-1zM511 230h1v19h-1zM512 230h1v19h-1zM513 230h1v19h-1zM514 236h1v13h-1zM515 230h1v19h-1zM516 230h1v19h-1zM517 224h1v25h-1zM518 224h1v25h-1zM519 224h1v25h-1zM520 218h1v31h-1zM521 218h1v31h-1zM522 206h1v43h-1zM523 224h1v25h-1z" fill="#00ffff"/>
<rect x="47" y="249" width="500" height="1" fill="#000"/>
<rect x="60" y="249" width="1" height="1" fill="#000080"/>
<rect x="71" y="249" width="1" height="1" fill="#000080"/>
<rect x="82" y="249" width="1" height="1" fill="#000080"/>
<rect x="93" y="249" width="1" height="1" fill="#000080"/>
<rect x="104" y="249" width="1" height="1" fill="#0000ff"/>
<rect x="115" y="249" width="1" height="1" fill="#000080"/>
<rect x="126" y="249" width="1" height="1" fill="#000080"/>
<rect x="137" y="249" width="1" height="1" fill="#000080"/>
<rect x="148" y="249" width="1" height="1" fill="#000080"/>
<rect x="159" y="249" width="1" height="1" fill="#0000ff"/>
<rect x="170" y="249" width="1" height="1" fill="#000080"/>
<rect x="181" y="249" width="1" height="1" fill="#000080"/>
<rect x="192" y="249" width="1" height="1" fill="#000080"/>
<rect x="203" y="249" width="1" height="1" fill="#000080"/>
<rect x="214" y="249" width="1" height="1" fill="#0000ff"/>
<rect x="225" y="249" width="1" height="1" fill="#000080"/>
<rect x="236" y="249" width="1" height="1" fill="#000080"/>
<rect x="247" y="249" width="1" height="1" fill="#000080"/>
<rect x="258" y="249" width="1" height="1" fill="#000080"/>
<rect x="269" y="249" width="1" height="1" fill="#0000ff"/>
<rect x="280" y="249" width="1" height="1" fill="#000080"/>
<rect x="291" y="249" width="1" height="1" fill="#000080"/>
<rect x="302" y="249" width="1" height="1" fill="#000080"/>
<rect x="313" y="249" width="1" height="1" fill="#000080"/>
<rect x="324" y="249" width="1" height="1" fill="#0000ff"/>
<rect x="335" y="249" width="1" height="1" fill="#000080"/>
<rect x="346" y="249" width="1" height="1" fill="#000080"/>
<rect x="357" y="249" width="1" height="1" fill="#000080"/>
<rect x="368" y="249" width="1" height="1" fill="#000080"/>
<rect x="379" y="249" width="1" height="1" fill="#0000ff"/>
<rect x="390" y="249" width="1" height="1" fill="#000080"/>
<rect x="401" y="249" width="1" height="1" fill="#000080"/>
<rect x="412" y="249" width="1" height="1" fill="#000080"/>
<rect x="423" y="249" width="1" height="1" fill="#000080"/>
<rect x="434" y="249" width="1" height="1" fill="#0000ff"/>
<rect x="445" y="249" width="1" height="1" fill="#000080"/>
<rect x="456" y="249" width="1" height="1" fill="#000080"/>
<rect x="467" y="249" width="1" height="1" fill="#000080"/>
<rect x="478" y="249" width="1" height="1" fill="#000080"/>
<rect x="489" y="249" width="1" height="1" fill="#0000ff"/>
<rect x="500" y="249" width="1" height="1" fill="#000080"/>
<rect x="511" y="249" width="1" height="1" fill="#000080"/>
<rect x="522" y="249" width="1" height="1" fill="#000080"/>
<rect x="533" y="249" width="1" height="1" fill="#000080"/>
<path d="M49 222 L50 222 L51 222 L52 222 L53 222 L54 222 L55 221 L56 222 L57 221 L58 221 L59 221 L60 220 L61 221 L62 221 L63 220 L64 220 L65 220 L66 220 L67 220 L68 219 L69 219 L70 220 L71 220 L72 219 L73 220 L74 219 L75 219 L76 219 L77 219 L78 219 L79 219 L80 219 L81 218 L82 218 L83 218 L84 218 L85 218 L86 217 L87 217 L88 218 L89 217 L90 217 L91 217 L92 217 L93 217 L94 217 L95 216 L96 217 L97 217 L98 216 L99 216 L100 216 L101 217 L102 216 L103 216 L104 216 L105 216 L106 216 L107 215 L108 216 L109 215 L110 215 L111 215 L112 215 L113 215 L114 215 L115 215 L116 215 L117 215 L118 215 L119 214 L120 214 L121 214 L122 214 L123 214 L124 214 L125 214 L126 213 L127 213 L128 213 L129 213 L130 213 L131 213 L132 213 L133 213 L134 213 L135 212 L136 212 L137 212 L138 212 L139 213 L140 213 L141 212 L142 212 L143 212 L144 212 L145 212 L146 212 L147 212 L148 211 L149 211 L150 211 L151 211 L152 211 L153 211 L154 211 L155 211 L156 211 L157 211 L158 210 L159 210 L160 211 L161 210 L162 210 L163 210 L164 210 L165 210 L166 210 L167 210 L168 209 L169 209 L170 209 L171 210 L172 209 L173 210 L174 209 L175 209 L176 209 L177 209 L178 209 L179 208 L180 208 L181 208 L182 208 L183 208 L184 208 L185 208 L186 208 L187 208 L188 208 L189 207 L190 208 L191 208 L192 207 L193 207 L194 208 L195 208 L196 207 L197 207 L198 207 L199 207 L200 207 L201 207 L202 207 L203 207 L204 206 L205 206 L206 207 L207 206 L208 206 L209 206 L210 206 L211 206 L212 206 L213 206 L214 206 L215 206 L216 206 L217 206 L218 205 L219 205 L220 205 L221 206 L222 205 L223 205 L224 205 L225 205 L226 205 L227 205 L228 205 L229 205 L230 205 L231 204 L232 204 L233 204 L234 204 L235 204 L236 204 L237 204 L238 204 L239 204 L240 204 L241 204 L242 204 L243 203 L244 203 L245 203 L246 203 L247 203 L248 204 L249 203 L250 203 L251 203 L252 203 L253 203 L254 203 L255 203 L256 203 L257 203 L258 202 L259 202 L260 202 L261 202 L262 203 L263 202 L264 202 L265 202 L266 201 L267 202 L268 202 L269 202 L270 201 L271 202 L272 201 L273 201 L274 201 L275 202 L276 201 L277 201 L278 201 L279 201 L280 201 L281 201 L282 200 L283 201 L284 201 L285 200 L286 201 L287 200 L288 200 L289 200 L290 201 L291 200 L292 200 L293 200 L294 200 L295 200 L296 200 L297 200 L298 200 L299 200 L300 200 L301 199 L302 200 L303 199 L304 199 L305 200 L306 199 L307 199 L308 199 L309 199 L310 199 L311 199 L312 199 L313 199 L314 199 L315 199 L316 199 L317 198 L318 198 L319 199 L320 198 L321 198 L322 198 L323 198 L324 198 L325 197 L326 198 L327 198 L328 198 L329 198 L330 198 L331 198 L332 197 L333 197 L334 197 L335 197 L336 197 L337 197 L338 197 L339 197 L340 196 L341 197 L342 197 L343 197 L344 197 L345 197 L346 197 L347 197 L348 196 L349 196 L350 196 L351 196 L352 196 L353 196 L354 196 L355 196 L356 196 L357 196 L358 196 L359 195 L360 196 L361 196 L362 196 L363 196 L364 195 L365 195 L366 195 L367 195 L368 195 L369 195 L370 195 L371 194 L372 195 L373 195 L374 195 L375 195 L376 195 L377 195 L378 194 L379 194 L380 194 L381 195 L382 194 L383 194 L384 194 L385 194 L386 194 L387 194 L388 194 L389 193 L390 194 L391 194 L392 193 L393 193 L394 194 L395 193 L396 193 L397 193 L398 193 L399 193 L400 193 L401 193 L402 193 L403 193 L404 193 L405 193 L406 193 L407 193 L408 193 L409 192 L410 192 L411 192 L412 192 L413 192 L414 192 L415 192 L416 192 L417 192 L418 192 L419 192 L420 191 L421 192 L422 192 L423 191 L424 191 L425 191 L426 192 L427 192 L428 191 L429 192 L430 191 L431 191 L432 191 L433 191 L434 190 L435 191 L436 191 L437 191 L438 191 L439 191 L440 190 L441 190 L442 190 L443 190 L444 190 L445 190 L446 190 L447 190 L448 190 L449 190 L450 190 L451 190 L452 190 L453 190 L454 190 L455 190 L456 189 L457 189 L458 190 L459 189 L460 190 L461 189 L462 190 L463 189 L464 189 L465 189 L466 189 L467 189 L468 189 L469 189 L470 188 L471 189 L472 188 L473 189 L474 189 L475 189 L476 188 L477 188 L478 189 L479 188 L480 188 L481 188 L482 189 L483 188 L484 188 L485 188 L486 188 L487 188 L488 188 L489 188 L490 187 L491 188 L492 187 L493 188 L494 187 L495 187 L496 187 L497 187 L498 188 L499 187 L500 188 L501 187 L502 187 L503 187 L504 187 L505 187 L506 187 L507 187 L508 187 L509 187 L510 187 L511 187 L512 186 L513 187 L514 187 L515 187 L516 186 L517 186 L518 186 L519 186 L520 186 L521 186 L522 186 L523 186" stroke="#00c000" stroke-width="1" fill="none"/>
<rect x="130" y="209" width="1" height="8" fill="#00c000"/>
<rect x="195" y="203" width="1" height="8" fill="#00c000"/>
<rect x="295" y="196" width="1" height="8" fill="#00c000"/>
<rect x="420" y="187" width="1" height="10" fill="#00c000"/>
<rect x="65" y="217" width="1" height="6" fill="#00c000"/>
<rect x="248" y="200" width="1" height="6" fill="#00c000"/>
<rect x="524" y="128" width="1" height="121" fill="#ece0b0"/>
<rect x="545" y="128" width="4" height="1" fill="#0000ff"/>
<rect x="545" y="136" width="2" height="1" fill="#0000ff"/>
<rect x="545" y="143" width="4" height="1" fill="#0000ff"/>
<rect x="545" y="151" width="2" height="1" fill="#0000ff"/>
<rect x="545" y="158" width="4" height="1" fill="#0000ff"/>
<rect x="545" y="166" width="2" height="1" fill="#0000ff"/>
<rect x="545" y="173" width="4" height="1" fill="#0000ff"/>
<rect x="545" y="181" width="2" height="1" fill="#0000ff"/>
<rect x="545" y="188" width="4" height="1" fill="#0000ff"/>
<rect x="545" y="196" width="2" height="1" fill="#0000ff"/>
<rect x="545" y="203" width="4" height="1" fill="#0000ff"/>
<rect x="545" y="211" width="2" height="1" fill="#0000ff"/>
<rect x="545" y="218" width="4" height="1" fill="#0000ff"/>
<rect x="545" y="226" width="2" height="1" fill="#0000ff"/>
<rect x="545" y="233" width="4" height="1" fill="#0000ff"/>
<rect x="545" y="241" width="2" height="1" fill="#0000ff"/>
<rect x="545" y="248" width="4" height="1" fill="#0000ff"/>
<defs><linearGradient id="bg278" gradientUnits="userSpaceOnUse" x1="0" x2="0" y1="278" y2="398"><stop offset="0" stop-color="#242424"/><stop offset="0.5" stop-color="#1a1a1a"/><stop offset="1" stop-color="#0c0c0c"/></linearGradient></defs>
<rect x="47" y="276" width="500" height="124" fill="#000"/>
<rect x="49" y="278" width="496" height="120" fill="url(#bg278)"/>
<rect x="47" y="276" width="2" height="1" fill="#c0c0c0"/>
<rect x="60" y="278" width="1" height="121" fill="#000080"/>
<rect x="71" y="278" width="1" height="121" fill="#000080"/>
<rect x="82" y="278" width="1" height="121" fill="#000080"/>
<rect x="93" y="278" width="1" height="121" fill="#000080"/>
<rect x="104" y="278" width="1" height="121" fill="#0000ff"/>
<rect x="115" y="278" width="1" height="121" fill="#000080"/>
<rect x="126" y="278" width="1" height="121" fill="#000080"/>
<rect x="137" y="278" width="1" height="121" fill="#000080"/>
<rect x="148" y="278" width="1" height="121" fill="#000080"/>
<rect x="159" y="278" width="1" height="121" fill="#0000ff"/>
<rect x="170" y="278" width="1" height="121" fill="#000080"/>
<rect x="181" y="278" width="1" height="121" fill="#000080"/>
<rect x="192" y="278" width="1" height="121" fill="#000080"/>
<rect x="203" y="278" width="1" height="121" fill="#000080"/>
<rect x="214" y="278" width="1" height="121" fill="#0000ff"/>
<rect x="225" y="278" width="1" height="121" fill="#000080"/>
<rect x="236" y="278" width="1" height="121" fill="#000080"/>
<rect x="247" y="278" width="1" height="121" fill="#000080"/>
<rect x="258" y="278" width="1" height="121" fill="#000080"/>
<rect x="269" y="278" width="1" height="121" fill="#0000ff"/>
<rect x="280" y="278" width="1" height="121" fill="#000080"/>
<rect x="291" y="278" width="1" height="121" fill="#000080"/>
<rect x="302" y="278" width="1" height="121" fill="#000080"/>
<rect x="313" y="278" width="1" height="121" fill="#000080"/>
<rect x="324" y="278" width="1" height="121" fill="#0000ff"/>
<rect x="335" y="278" width="1" height="121" fill="#000080"/>
<rect x="346" y="278" width="1" height="121" fill="#000080"/>
<rect x="357" y="278" width="1" height="121" fill="#000080"/>
<rect x="368" y="278" width="1" height="121" fill="#000080"/>
<rect x="379" y="278" width="1" height="121" fill="#0000ff"/>
<rect x="390" y="278" width="1" height="121" fill="#000080"/>
<rect x="401" y="278" width="1" height="121" fill="#000080"/>
<rect x="412" y="278" width="1" height="121" fill="#000080"/>
<rect x="423" y="278" width="1" height="121" fill="#000080"/>
<rect x="434" y="278" width="1" height="121" fill="#0000ff"/>
<rect x="445" y="278" width="1" height="121" fill="#000080"/>
<rect x="456" y="278" width="1" height="121" fill="#000080"/>
<rect x="467" y="278" width="1" height="121" fill="#000080"/>
<rect x="478" y="278" width="1" height="121" fill="#000080"/>
<rect x="489" y="278" width="1" height="121" fill="#0000ff"/>
<rect x="500" y="278" width="1" height="121" fill="#000080"/>
<rect x="511" y="278" width="1" height="121" fill="#000080"/>
<rect x="522" y="278" width="1" height="121" fill="#000080"/>
<rect x="533" y="278" width="1" height="121" fill="#000080"/>
<rect x="46" y="278" width="499" height="1" fill="#0000ff"/>
<rect x="49" y="290" width="496" height="1" fill="#000080"/>
<rect x="46" y="302" width="499" height="1" fill="#0000ff"/>
<rect x="49" y="314" width="496" height="1" fill="#000080"/>
<rect x="46" y="326" width="499" height="1" fill="#0000ff"/>
<rect x="49" y="338" width="496" height="1" fill="#000080"/>
<rect x="46" y="350" width="499" height="1" fill="#0000ff"/>
<rect x="49" y="362" width="496" height="1" fill="#000080"/>
<rect x="46" y="374" width="499" height="1" fill="#0000ff"/>
<rect x="49" y="386" width="496" height="1" fill="#000080"/>
<rect x="46" y="398" width="499" height="1" fill="#0000ff"/>
<path d="M49 386h7v13h-7zM59 386h3v13h-3zM63 386h1v13h-1zM65 386h7v13h-7zM73 386h9v13h-9zM83 386h1v13h-1zM85 386h1v13h-1zM98 386h1v13h-1zM101 386h1v13h-1zM104 386h1v13h-1zM107 386h5v13h-5zM113 386h1v13h-1zM115 386h4v13h-4zM122 386h1v13h-1zM125 386h1v13h-1zM131 386h1v13h-1zM135 386h4v13h-4zM142 386h4v13h-4zM147 386h2v13h-2zM152 386h1v13h-1zM159 386h10v13h-10zM169 386h1v13h-1zM171 386h3v13h-3zM185 386h1v13h-1zM187 386h1v13h-1zM195 386h1v13h-1zM197 386h1v13h-1zM206 386h2v13h-2zM214 386h1v13h-1zM221 386h4v13h-4zM225 386h1v13h-1zM231 386h1v13h-1zM235 386h1v13h-1zM238 386h1v13h-1zM244 386h1v13h-1zM252 386h1v13h-1zM260 386h1v13h-1zM264 386h1v13h-1zM267 386h1v13h-1zM269 386h1v13h-1zM271 386h4v13h-4zM277 386h1v13h-1zM280 386h1v13h-1zM284 386h3v13h-3zM296 386h1v13h-1zM298 386h6v13h-6zM306 386h3v13h-3zM311 386h1v13h-1zM314 386h3v13h-3zM318 386h3v13h-3zM322 386h1v13h-1zM327 386h1v13h-1zM329 386h4v13h-4zM334 386h4v13h-4zM338 386h1v13h-1zM345 386h3v13h-3zM353 386h1v13h-1zM365 386h3v13h-3zM368 386h1v13h-1zM373 386h3v13h-3zM378 386h1v13h-1zM381 386h1v13h-1zM383 386h1v13h-1zM386 386h1v13h-1zM392 386h4v13h-4zM396 386h1v13h-1zM399 386h4v13h-4zM403 386h5v13h-5zM407 386h1v13h-1zM418 386h2v13h-2zM423 386h3v13h-3zM433 386h4v13h-4zM438 386h1v13h-1zM443 386h3v13h-3zM447 386h1v13h-1zM451 386h1v13h-1zM466 386h1v13h-1zM476 386h3v13h-3zM488 386h1v13h-1zM494 386h2v13h-2zM499 386h3v13h-3zM502 386h6v13h-6zM509 386h3v13h-3zM512 386h1v13h-1zM517 386h1v13h-1zM519 386h1v13h-1zM522 386h2v13h-2zM60 374h1v25h-1zM70 374h1v25h-1zM75 374h1v25h-1zM115 374h4v25h-4zM136 374h1v25h-1zM144 374h2v25h-2zM159 374h6v25h-6zM178 374h1v25h-1zM221 374h3v25h-3zM235 374h1v25h-1zM260 374h1v25h-1zM264 374h1v25h-1zM274 374h1v25h-1zM277 374h1v25h-1zM280 374h1v25h-1zM285 374h2v25h-2zM296 374h1v25h-1zM300 374h3v25h-3zM306 374h1v25h-1zM315 374h1v25h-1zM327 374h1v25h-1zM329 374h1v25h-1zM336 374h1v25h-1zM345 374h3v25h-3zM353 374h1v25h-1zM373 374h3v25h-3zM399 374h1v25h-1zM403 374h5v25h-5zM407 374h1v25h-1zM418 374h1v25h-1zM424 374h1v25h-1zM434 374h1v25h-1zM443 374h3v25h-3zM476 374h2v25h-2zM494 374h1v25h-1zM499 374h1v25h-1zM504 374h4v25h-4zM510 374h1v25h-1zM517 374h1v25h-1z" fill="#80ff00"/>
<path d="M160 362h3v12h-3zM207 362h1v12h-1zM403 362h1v12h-1zM443 362h1v12h-1z" fill="#ffff00"/>
<rect x="49" y="314" width="1" height="84" fill="#d0b070"/>
<path d="M49 339 L50 338 L51 338 L52 339 L53 337 L54 338 L55 338 L56 337 L57 338 L58 337 L59 338 L60 338 L61 338 L62 338 L63 339 L64 337 L65 339 L66 338 L67 337 L68 338 L69 338 L70 338 L71 338 L72 338 L73 338 L74 337 L75 338 L76 339 L77 339 L78 338 L79 338 L80 338 L81 337 L82 337 L83 338 L84 338 L85 338 L86 338 L87 338 L88 338 L89 338 L90 339 L91 338 L92 338 L93 338 L94 338 L95 338 L96 337 L97 338 L98 338 L99 338 L100 338 L101 338 L102 337 L103 338 L104 338 L105 338 L106 338 L107 336 L108 338 L109 337 L110 336 L111 337 L112 337 L113 337 L114 337 L115 337 L116 337 L117 337 L118 337 L119 337 L120 336 L121 337 L122 336 L123 337 L124 337 L125 336 L126 338 L127 337 L128 337 L129 337 L130 338 L131 336 L132 337 L133 336 L134 337 L135 338 L136 337 L137 336 L138 337 L139 337 L140 337 L141 338 L142 337 L143 338 L144 337 L145 337 L146 336 L147 338 L148 337 L149 337 L150 336 L151 337 L152 336 L153 337 L154 337 L155 338 L156 338 L157 337 L158 337 L159 337 L160 337 L161 338 L162 336 L163 337 L164 337 L165 337 L166 337 L167 336 L168 337 L169 337 L170 337 L171 337 L172 336 L173 336 L174 338 L175 338 L176 338 L177 337 L178 338 L179 339 L180 338 L181 338 L182 338 L183 338 L184 338 L185 337 L186 337 L187 338 L188 338 L189 338 L190 338 L191 339 L192 338 L193 338 L194 337 L195 338 L196 338 L197 338 L198 338 L199 337 L200 338 L201 338 L202 338 L203 338 L204 339 L205 338 L206 340 L207 339 L208 339 L209 339 L210 339 L211 339 L212 339 L213 339 L214 339 L215 339 L216 338 L217 339 L218 340 L219 339 L220 339 L221 339 L222 339 L223 338 L224 339 L225 339 L226 340 L227 340 L228 340 L229 339 L230 338 L231 339 L232 340 L233 338 L234 339 L235 339 L236 340 L237 339 L238 339 L239 339 L240 339 L241 339 L242 339 L243 340 L244 338 L245 339 L246 340 L247 339 L248 339 L249 339 L250 339 L251 339 L252 340 L253 339 L254 339 L255 339 L256 339 L257 339 L258 339 L259 339 L260 339 L261 340 L262 340 L263 341 L264 340 L265 341 L266 340 L267 340 L268 340 L269 340 L270 340 L271 339 L272 340 L273 340 L274 341 L275 341 L276 341 L277 340 L278 340 L279 341 L280 341 L281 340 L282 339 L283 340 L284 340 L285 341 L286 340 L287 341 L288 340 L289 340 L290 340 L291 339 L292 340 L293 340 L294 340 L295 339 L296 340 L297 339 L298 340 L299 340 L300 340 L301 340 L302 341 L303 334 L304 335 L305 335 L306 335 L307 335 L308 336 L309 334 L310 336 L311 335 L312 335 L313 335 L314 334 L315 335 L316 335 L317 335 L318 335 L319 334 L320 336 L321 335 L322 334 L323 336 L324 336 L325 335 L326 334 L327 335 L328 336 L329 336 L330 335 L331 336 L332 335 L333 335 L334 335 L335 335 L336 335 L337 336 L338 336 L339 335 L340 335 L341 335 L342 335 L343 336 L344 335 L345 336 L346 335 L347 335 L348 335 L349 336 L350 334 L351 335 L352 334 L353 335 L354 334 L355 335 L356 336 L357 336 L358 336 L359 335 L360 335 L361 336 L362 335 L363 335 L364 335 L365 335 L366 335 L367 335 L368 335 L369 335 L370 335 L371 335 L372 336 L373 336 L374 335 L375 335 L376 335 L377 335 L378 335 L379 334 L380 335 L381 335 L382 335 L383 335 L384 335 L385 335 L386 334 L387 334 L388 336 L389 335 L390 335 L391 335 L392 334 L393 335 L394 335 L395 334 L396 335 L397 336 L398 336 L399 335 L400 335 L401 335 L402 334 L403 335 L404 335 L405 335 L406 335 L407 335 L408 335 L409 335 L410 336 L411 335 L412 336 L413 336 L414 334 L415 334 L416 335 L417 335 L418 336 L419 337 L420 336 L421 337 L422 336 L423 337 L424 335 L425 336 L426 336 L427 336 L428 337 L429 336 L430 335 L431 335 L432 336 L433 337 L434 336 L435 335 L436 337 L437 336 L438 335 L439 336 L440 336 L441 337 L442 337 L443 336 L444 336 L445 336 L446 336 L447 336 L448 336 L449 336 L450 335 L451 336 L452 335 L453 337 L454 338 L455 337 L456 337 L457 337 L458 337 L459 337 L460 337 L461 338 L462 337 L463 337 L464 338 L465 337 L466 337 L467 338 L468 338 L469 336 L470 336 L471 337 L472 337 L473 336 L474 336 L475 336 L476 337 L477 337 L478 337 L479 338 L480 338 L481 337 L482 337 L483 337 L484 338 L485 339 L486 337 L487 338 L488 338 L489 338 L490 338 L491 338 L492 339 L493 338 L494 338 L495 338 L496 337 L497 339 L498 338 L499 337 L500 339 L501 337 L502 338 L503 337 L504 338 L505 337 L506 339 L507 339 L508 337 L509 338 L510 339 L511 338 L512 337 L513 338 L514 337 L515 338 L516 339 L517 338 L518 338 L519 338 L520 338 L521 337 L522 338 L523 338" stroke="#ff00ff" stroke-width="1" fill="none"/>
<rect x="524" y="278" width="1" height="121" fill="#ece0b0"/>
<rect x="47" y="399" width="500" height="1" fill="#000"/>
<rect x="60" y="399" width="1" height="1" fill="#000080"/>
<rect x="71" y="399" width="1" height="1" fill="#000080"/>
<rect x="82" y="399" width="1" height="1" fill="#000080"/>
<rect x="93" y="399" width="1" height="1" fill="#000080"/>
<rect x="104" y="399" width="1" height="1" fill="#0000ff"/>
<rect x="115" y="399" width="1" height="1" fill="#000080"/>
<rect x="126" y="399" width="1" height="1" fill="#000080"/>
<rect x="137" y="399" width="1" height="1" fill="#000080"/>
<rect x="148" y="399" width="1" height="1" fill="#000080"/>
<rect x="159" y="399" width="1" height="1" fill="#0000ff"/>
<rect x="170" y="399" width="1" height="1" fill="#000080"/>
<rect x="181" y="399" width="1" height="1" fill="#000080"/>
<rect x="192" y="399" width="1" height="1" fill="#000080"/>
<rect x="203" y="399" width="1" height="1" fill="#000080"/>
<rect x="214" y="399" width="1" height="1" fill="#0000ff"/>
<rect x="225" y="399" width="1" height="1" fill="#000080"/>
<rect x="236" y="399" width="1" height="1" fill="#000080"/>
<rect x="247" y="399" width="1" height="1" fill="#000080"/>
<rect x="258" y="399" width="1" height="1" fill="#000080"/>
<rect x="269" y="399" width="1" height="1" fill="#0000ff"/>
<rect x="280" y="399" width="1" height="1" fill="#000080"/>
<rect x="291" y="399" width="1" height="1" fill="#000080"/>
<rect x="302" y="399" width="1" height="1" fill="#000080"/>
<rect x="313" y="399" width="1" height="1" fill="#000080"/>
<rect x="324" y="399" width="1" height="1" fill="#0000ff"/>
<rect x="335" y="399" width="1" height="1" fill="#000080"/>
<rect x="346" y="399" width="1" height="1" fill="#000080"/>
<rect x="357" y="399" width="1" height="1" fill="#000080"/>
<rect x="368" y="399" width="1" height="1" fill="#000080"/>
<rect x="379" y="399" width="1" height="1" fill="#0000ff"/>
<rect x="390" y="399" width="1" height="1" fill="#000080"/>
<rect x="401" y="399" width="1" height="1" fill="#000080"/>
<rect x="412" y="399" width="1" height="1" fill="#000080"/>
<rect x="423" y="399" width="1" height="1" fill="#000080"/>
<rect x="434" y="399" width="1" height="1" fill="#0000ff"/>
<rect x="445" y="399" width="1" height="1" fill="#000080"/>
<rect x="456" y="399" width="1" height="1" fill="#000080"/>
<rect x="467" y="399" width="1" height="1" fill="#000080"/>
<rect x="478" y="399" width="1" height="1" fill="#000080"/>
<rect x="489" y="399" width="1" height="1" fill="#0000ff"/>
<rect x="500" y="399" width="1" height="1" fill="#000080"/>
<rect x="511" y="399" width="1" height="1" fill="#000080"/>
<rect x="522" y="399" width="1" height="1" fill="#000080"/>
<rect x="533" y="399" width="1" height="1" fill="#000080"/>
<text x="42" y="129" font-size="12.6" text-anchor="end" textLength="13.5" lengthAdjust="spacingAndGlyphs">20</text>
<text x="42" y="153" font-size="12.6" text-anchor="end" textLength="13.5" lengthAdjust="spacingAndGlyphs">16</text>
<text x="42" y="177" font-size="12.6" text-anchor="end" textLength="13.5" lengthAdjust="spacingAndGlyphs">12</text>
<text x="42" y="201" font-size="12.6" text-anchor="end">8</text>
<text x="42" y="225" font-size="12.6" text-anchor="end">4</text>
<text x="42" y="279" font-size="12.6" text-anchor="end" textLength="13.5" lengthAdjust="spacingAndGlyphs">10</text>
<text x="42" y="303" font-size="12.6" text-anchor="end">8</text>
<text x="42" y="327" font-size="12.6" text-anchor="end">6</text>
<text x="42" y="351" font-size="12.6" text-anchor="end">4</text>
<text x="42" y="375" font-size="12.6" text-anchor="end">2</text>
<text x="549" y="129" font-size="12.6" textLength="13.5" lengthAdjust="spacingAndGlyphs">16</text>
<text x="549" y="144" font-size="12.6" textLength="13.5" lengthAdjust="spacingAndGlyphs">14</text>
<text x="549" y="159" font-size="12.6" textLength="13.5" lengthAdjust="spacingAndGlyphs">12</text>
<text x="549" y="174" font-size="12.6" textLength="13.5" lengthAdjust="spacingAndGlyphs">10</text>
<text x="549" y="189" font-size="12.6">8</text>
<text x="549" y="204" font-size="12.6">6</text>
<text x="549" y="219" font-size="12.6">4</text>
<text x="549" y="234" font-size="12.6">2</text>
<text x="549" y="279" font-size="12.6" textLength="13.5" lengthAdjust="spacingAndGlyphs">20</text>
<text x="549" y="303" font-size="12.6" textLength="13.5" lengthAdjust="spacingAndGlyphs">16</text>
<text x="549" y="327" font-size="12.6" textLength="13.5" lengthAdjust="spacingAndGlyphs">12</text>
<text x="549" y="351" font-size="12.6">8</text>
<text x="549" y="375" font-size="12.6">4</text>
<text x="50.0" y="261" font-size="12.6" text-anchor="middle" textLength="15.5" lengthAdjust="spacingAndGlyphs">0.0</text>
<text x="50.0" y="411" font-size="12.6" text-anchor="middle" textLength="15.5" lengthAdjust="spacingAndGlyphs">0.0</text>
<text x="105.0" y="261" font-size="12.6" text-anchor="middle" textLength="15.5" lengthAdjust="spacingAndGlyphs">0.5</text>
<text x="105.0" y="411" font-size="12.6" text-anchor="middle" textLength="15.5" lengthAdjust="spacingAndGlyphs">0.5</text>
<text x="160.0" y="261" font-size="12.6" text-anchor="middle" textLength="15.5" lengthAdjust="spacingAndGlyphs">1.0</text>
<text x="160.0" y="411" font-size="12.6" text-anchor="middle" textLength="15.5" lengthAdjust="spacingAndGlyphs">1.0</text>
<text x="215.0" y="261" font-size="12.6" text-anchor="middle" textLength="15.5" lengthAdjust="spacingAndGlyphs">1.5</text>
<text x="215.0" y="411" font-size="12.6" text-anchor="middle" textLength="15.5" lengthAdjust="spacingAndGlyphs">1.5</text>
<text x="270.0" y="261" font-size="12.6" text-anchor="middle" textLength="15.5" lengthAdjust="spacingAndGlyphs">2.0</text>
<text x="270.0" y="411" font-size="12.6" text-anchor="middle" textLength="15.5" lengthAdjust="spacingAndGlyphs">2.0</text>
<text x="325.0" y="261" font-size="12.6" text-anchor="middle" textLength="15.5" lengthAdjust="spacingAndGlyphs">2.5</text>
<text x="325.0" y="411" font-size="12.6" text-anchor="middle" textLength="15.5" lengthAdjust="spacingAndGlyphs">2.5</text>
<text x="380.0" y="261" font-size="12.6" text-anchor="middle" textLength="15.5" lengthAdjust="spacingAndGlyphs">3.0</text>
<text x="380.0" y="411" font-size="12.6" text-anchor="middle" textLength="15.5" lengthAdjust="spacingAndGlyphs">3.0</text>
<text x="435.0" y="261" font-size="12.6" text-anchor="middle" textLength="15.5" lengthAdjust="spacingAndGlyphs">3.5</text>
<text x="435.0" y="411" font-size="12.6" text-anchor="middle" textLength="15.5" lengthAdjust="spacingAndGlyphs">3.5</text>
<text x="490.0" y="261" font-size="12.6" text-anchor="middle" textLength="15.5" lengthAdjust="spacingAndGlyphs">4.0</text>
<text x="490.0" y="411" font-size="12.6" text-anchor="middle" textLength="15.5" lengthAdjust="spacingAndGlyphs">4.0</text>
<text x="545.0" y="261" font-size="12.6" text-anchor="middle" textLength="15.5" lengthAdjust="spacingAndGlyphs">4.5</text>
<text x="545.0" y="411" font-size="12.6" text-anchor="middle" textLength="15.5" lengthAdjust="spacingAndGlyphs">4.5</text>
<rect x="572" y="122" width="162" height="1" fill="#808080"/>
<rect x="572" y="122" width="1" height="76" fill="#808080"/>
<rect x="572" y="197" width="162" height="1" fill="#808080"/>
<rect x="733" y="122" width="1" height="76" fill="#808080"/>
<rect x="573" y="123" width="162" height="1" fill="#ffffff"/>
<rect x="573" y="123" width="1" height="76" fill="#ffffff"/>
<rect x="572" y="198" width="163" height="1" fill="#ffffff"/>
<rect x="734" y="122" width="1" height="77" fill="#ffffff"/>
<rect x="573" y="197" width="160" height="1" fill="#808080"/>
<rect x="733" y="123" width="1" height="75" fill="#808080"/>
<rect x="578" y="122" width="64" height="2" fill="#c0c0c0"/>
<text x="580.5" y="126.4" font-size="12" fill="#000000" stroke="#000000" stroke-width="0.2" textLength="59.5" lengthAdjust="spacingAndGlyphs">ディスク情報</text>
<text x="580" y="138.9" font-size="12" fill="#000000" stroke="#000000" stroke-width="0.2" textLength="26.5" lengthAdjust="spacingAndGlyphs">種類:</text>
<text x="580" y="156" font-size="12.7" fill="#000000" textLength="13.5" lengthAdjust="spacingAndGlyphs">ID:</text>
<text x="580" y="171.9" font-size="12" fill="#000000" stroke="#000000" stroke-width="0.2" textLength="26.5" lengthAdjust="spacingAndGlyphs">日付:</text>
<text x="580" y="188.4" font-size="12" fill="#000000" stroke="#000000" stroke-width="0.2" textLength="30.5" lengthAdjust="spacingAndGlyphs">ラベル:</text>
<text x="635" y="139" font-size="12.7" fill="#000080" textLength="39.5" lengthAdjust="spacingAndGlyphs">DVD+R</text>
<text x="635" y="156" font-size="12.7" fill="#000080" textLength="44.5" lengthAdjust="spacingAndGlyphs">TDK 003</text>
<text x="635" y="172" font-size="12.7" fill="#000080" textLength="55.5" lengthAdjust="spacingAndGlyphs">9 Jul 2007</text>
<text x="635.5" y="189" font-size="12.7" fill="#000080" textLength="43.5" lengthAdjust="spacingAndGlyphs">JIKAN_3</text>
<rect x="572" y="206" width="162" height="1" fill="#808080"/>
<rect x="572" y="206" width="1" height="188" fill="#808080"/>
<rect x="572" y="393" width="162" height="1" fill="#808080"/>
<rect x="733" y="206" width="1" height="188" fill="#808080"/>
<rect x="573" y="207" width="162" height="1" fill="#ffffff"/>
<rect x="573" y="207" width="1" height="188" fill="#ffffff"/>
<rect x="572" y="394" width="163" height="1" fill="#ffffff"/>
<rect x="734" y="206" width="1" height="189" fill="#ffffff"/>
<rect x="573" y="393" width="160" height="1" fill="#808080"/>
<rect x="733" y="207" width="1" height="187" fill="#808080"/>
<rect x="578" y="206" width="30" height="2" fill="#c0c0c0"/>
<text x="580" y="210.4" font-size="12" fill="#000000" stroke="#000000" stroke-width="0.2" textLength="25.5" lengthAdjust="spacingAndGlyphs">設定</text>
<rect x="582" y="215" width="98" height="20" fill="#ffffff"/>
<rect x="582" y="215" width="97" height="1" fill="#808080"/>
<rect x="582" y="215" width="1" height="19" fill="#808080"/>
<rect x="582" y="234" width="98" height="1" fill="#ffffff"/>
<rect x="679" y="215" width="1" height="20" fill="#ffffff"/>
<rect x="583" y="216" width="95" height="1" fill="#000000"/>
<rect x="583" y="216" width="1" height="17" fill="#000000"/>
<rect x="583" y="233" width="96" height="1" fill="#c0c0c0"/>
<rect x="678" y="216" width="1" height="18" fill="#c0c0c0"/>
<rect x="662" y="217" width="16" height="16" fill="#c0c0c0"/>
<rect x="662" y="217" width="15" height="1" fill="#ffffff"/>
<rect x="662" y="217" width="1" height="15" fill="#ffffff"/>
<rect x="662" y="232" width="16" height="1" fill="#000000"/>
<rect x="677" y="217" width="1" height="16" fill="#000000"/>
<rect x="663" y="218" width="13" height="1" fill="#c0c0c0"/>
<rect x="663" y="218" width="1" height="13" fill="#c0c0c0"/>
<rect x="663" y="231" width="14" height="1" fill="#808080"/>
<rect x="676" y="218" width="1" height="14" fill="#808080"/>
<rect x="666" y="222" width="7" height="1" fill="#000000"/>
<rect x="667" y="223" width="5" height="1" fill="#000000"/>
<rect x="668" y="224" width="3" height="1" fill="#000000"/>
<rect x="669" y="225" width="1" height="1" fill="#000000"/>
<text x="585" y="228.5" font-size="12.7" fill="#000000" textLength="20.5" lengthAdjust="spacingAndGlyphs">8 X</text>
<rect x="689" y="213" width="26" height="22" fill="#c0c0c0"/>
<rect x="689" y="213" width="25" height="1" fill="#ffffff"/>
<rect x="689" y="213" width="1" height="21" fill="#ffffff"/>
<rect x="689" y="234" width="26" height="1" fill="#000000"/>
<rect x="714" y="213" width="1" height="22" fill="#000000"/>
<rect x="690" y="214" width="23" height="1" fill="#c0c0c0"/>
<rect x="690" y="214" width="1" height="19" fill="#c0c0c0"/>
<rect x="690" y="233" width="24" height="1" fill="#808080"/>
<rect x="713" y="214" width="1" height="20" fill="#808080"/>
<g transform="translate(694,216)"><rect x="0.5" y="0.5" width="14" height="15" fill="#fff" stroke="#000"/><path d="M4 7 A4 4 0 0 1 11 5 M11 9 A4 4 0 0 1 4 11" stroke="#18a018" stroke-width="1.6" fill="none"/><path d="M9 2l3 3-3 2z M6 14l-3-3 3-2z" fill="#18a018"/></g>
<text x="584" y="252.9" font-size="12" fill="#000000" stroke="#000000" stroke-width="0.2" textLength="24.5" lengthAdjust="spacingAndGlyphs">開始</text>
<rect x="645" y="240" width="70" height="17" fill="#ffffff"/>
<rect x="645" y="240" width="69" height="1" fill="#808080"/>
<rect x="645" y="240" width="1" height="16" fill="#808080"/>
<rect x="645" y="256" width="70" height="1" fill="#ffffff"/>
<rect x="714" y="240" width="1" height="17" fill="#ffffff"/>
<rect x="646" y="241" width="67" height="1" fill="#000000"/>
<rect x="646" y="241" width="1" height="14" fill="#000000"/>
<rect x="646" y="255" width="68" height="1" fill="#c0c0c0"/>
<rect x="713" y="241" width="1" height="15" fill="#c0c0c0"/>
<text x="648" y="251.5" font-size="12.7" fill="#000000" textLength="46.0" lengthAdjust="spacingAndGlyphs">0000 MB</text>
<text x="584" y="273.9" font-size="12" fill="#000000" stroke="#000000" stroke-width="0.2" textLength="26.5" lengthAdjust="spacingAndGlyphs">終了:</text>
<rect x="645" y="260" width="70" height="17" fill="#ffffff"/>
<rect x="645" y="260" width="69" height="1" fill="#808080"/>
<rect x="645" y="260" width="1" height="16" fill="#808080"/>
<rect x="645" y="276" width="70" height="1" fill="#ffffff"/>
<rect x="714" y="260" width="1" height="17" fill="#ffffff"/>
<rect x="646" y="261" width="67" height="1" fill="#000000"/>
<rect x="646" y="261" width="1" height="14" fill="#000000"/>
<rect x="646" y="275" width="68" height="1" fill="#c0c0c0"/>
<rect x="713" y="261" width="1" height="15" fill="#c0c0c0"/>
<text x="648" y="272" font-size="12.7" fill="#000000" textLength="46.0" lengthAdjust="spacingAndGlyphs">4421 MB</text>
<rect x="584" y="281" width="13" height="13" fill="#ffffff"/>
<rect x="584" y="281" width="12" height="1" fill="#808080"/>
<rect x="584" y="281" width="1" height="12" fill="#808080"/>
<rect x="584" y="293" width="13" height="1" fill="#ffffff"/>
<rect x="596" y="281" width="1" height="13" fill="#ffffff"/>
<rect x="585" y="282" width="10" height="1" fill="#000000"/>
<rect x="585" y="282" width="1" height="10" fill="#000000"/>
<rect x="585" y="292" width="11" height="1" fill="#c0c0c0"/>
<rect x="595" y="282" width="1" height="11" fill="#c0c0c0"/>
<text x="602" y="290.4" font-size="12" fill="#000000" stroke="#000000" stroke-width="0.2" textLength="66.5" lengthAdjust="spacingAndGlyphs">クイックスキャン</text>
<rect x="584" y="296" width="13" height="13" fill="#ffffff"/>
<rect x="584" y="296" width="12" height="1" fill="#808080"/>
<rect x="584" y="296" width="1" height="12" fill="#808080"/>
<rect x="584" y="308" width="13" height="1" fill="#ffffff"/>
<rect x="596" y="296" width="1" height="13" fill="#ffffff"/>
<rect x="585" y="297" width="10" height="1" fill="#000000"/>
<rect x="585" y="297" width="1" height="10" fill="#000000"/>
<rect x="585" y="307" width="11" height="1" fill="#c0c0c0"/>
<rect x="595" y="297" width="1" height="11" fill="#c0c0c0"/>
<rect x="593" y="299" width="1" height="1" fill="#000000"/>
<rect x="592" y="300" width="1" height="1" fill="#000000"/>
<rect x="593" y="300" width="1" height="1" fill="#000000"/>
<rect x="587" y="301" width="1" height="1" fill="#000000"/>
<rect x="591" y="301" width="1" height="1" fill="#000000"/>
<rect x="592" y="301" width="1" height="1" fill="#000000"/>
<rect x="593" y="301" width="1" height="1" fill="#000000"/>
<rect x="587" y="302" width="1" height="1" fill="#000000"/>
<rect x="588" y="302" width="1" height="1" fill="#000000"/>
<rect x="590" y="302" width="1" height="1" fill="#000000"/>
<rect x="591" y="302" width="1" height="1" fill="#000000"/>
<rect x="592" y="302" width="1" height="1" fill="#000000"/>
<rect x="587" y="303" width="1" height="1" fill="#000000"/>
<rect x="588" y="303" width="1" height="1" fill="#000000"/>
<rect x="589" y="303" width="1" height="1" fill="#000000"/>
<rect x="590" y="303" width="1" height="1" fill="#000000"/>
<rect x="591" y="303" width="1" height="1" fill="#000000"/>
<rect x="588" y="304" width="1" height="1" fill="#000000"/>
<rect x="589" y="304" width="1" height="1" fill="#000000"/>
<rect x="590" y="304" width="1" height="1" fill="#000000"/>
<rect x="589" y="305" width="1" height="1" fill="#000000"/>
<text x="602" y="305.4" font-size="12" fill="#000000" stroke="#000000" stroke-width="0.2" textLength="71.0" lengthAdjust="spacingAndGlyphs">C1/PIEを表示</text>
<rect x="584" y="310" width="13" height="13" fill="#ffffff"/>
<rect x="584" y="310" width="12" height="1" fill="#808080"/>
<rect x="584" y="310" width="1" height="12" fill="#808080"/>
<rect x="584" y="322" width="13" height="1" fill="#ffffff"/>
<rect x="596" y="310" width="1" height="13" fill="#ffffff"/>
<rect x="585" y="311" width="10" height="1" fill="#000000"/>
<rect x="585" y="311" width="1" height="10" fill="#000000"/>
<rect x="585" y="321" width="11" height="1" fill="#c0c0c0"/>
<rect x="595" y="311" width="1" height="11" fill="#c0c0c0"/>
<rect x="593" y="313" width="1" height="1" fill="#000000"/>
<rect x="592" y="314" width="1" height="1" fill="#000000"/>
<rect x="593" y="314" width="1" height="1" fill="#000000"/>
<rect x="587" y="315" width="1" height="1" fill="#000000"/>
<rect x="591" y="315" width="1" height="1" fill="#000000"/>
<rect x="592" y="315" width="1" height="1" fill="#000000"/>
<rect x="593" y="315" width="1" height="1" fill="#000000"/>
<rect x="587" y="316" width="1" height="1" fill="#000000"/>
<rect x="588" y="316" width="1" height="1" fill="#000000"/>
<rect x="590" y="316" width="1" height="1" fill="#000000"/>
<rect x="591" y="316" width="1" height="1" fill="#000000"/>
<rect x="592" y="316" width="1" height="1" fill="#000000"/>
<rect x="587" y="317" width="1" height="1" fill="#000000"/>
<rect x="588" y="317" width="1" height="1" fill="#000000"/>
<rect x="589" y="317" width="1" height="1" fill="#000000"/>
<rect x="590" y="317" width="1" height="1" fill="#000000"/>
<rect x="591" y="317" width="1" height="1" fill="#000000"/>
<rect x="588" y="318" width="1" height="1" fill="#000000"/>
<rect x="589" y="318" width="1" height="1" fill="#000000"/>
<rect x="590" y="318" width="1" height="1" fill="#000000"/>
<rect x="589" y="319" width="1" height="1" fill="#000000"/>
<text x="602" y="319.4" font-size="12" fill="#000000" stroke="#000000" stroke-width="0.2" textLength="71.0" lengthAdjust="spacingAndGlyphs">C2/PIFを表示</text>
<rect x="584" y="325" width="13" height="13" fill="#ffffff"/>
<rect x="584" y="325" width="12" height="1" fill="#808080"/>
<rect x="584" y="325" width="1" height="12" fill="#808080"/>
<rect x="584" y="337" width="13" height="1" fill="#ffffff"/>
<rect x="596" y="325" width="1" height="13" fill="#ffffff"/>
<rect x="585" y="326" width="10" height="1" fill="#000000"/>
<rect x="585" y="326" width="1" height="10" fill="#000000"/>
<rect x="585" y="336" width="11" height="1" fill="#c0c0c0"/>
<rect x="595" y="326" width="1" height="11" fill="#c0c0c0"/>
<rect x="593" y="328" width="1" height="1" fill="#000000"/>
<rect x="592" y="329" width="1" height="1" fill="#000000"/>
<rect x="593" y="329" width="1" height="1" fill="#000000"/>
<rect x="587" y="330" width="1" height="1" fill="#000000"/>
<rect x="591" y="330" width="1" height="1" fill="#000000"/>
<rect x="592" y="330" width="1" height="1" fill="#000000"/>
<rect x="593" y="330" width="1" height="1" fill="#000000"/>
<rect x="587" y="331" width="1" height="1" fill="#000000"/>
<rect x="588" y="331" width="1" height="1" fill="#000000"/>
<rect x="590" y="331" width="1" height="1" fill="#000000"/>
<rect x="591" y="331" width="1" height="1" fill="#000000"/>
<rect x="592" y="331" width="1" height="1" fill="#000000"/>
<rect x="587" y="332" width="1" height="1" fill="#000000"/>
<rect x="588" y="332" width="1" height="1" fill="#000000"/>
<rect x="589" y="332" width="1" height="1" fill="#000000"/>
<rect x="590" y="332" width="1" height="1" fill="#000000"/>
<rect x="591" y="332" width="1" height="1" fill="#000000"/>
<rect x="588" y="333" width="1" height="1" fill="#000000"/>
<rect x="589" y="333" width="1" height="1" fill="#000000"/>
<rect x="590" y="333" width="1" height="1" fill="#000000"/>
<rect x="589" y="334" width="1" height="1" fill="#000000"/>
<text x="602" y="334.4" font-size="12" fill="#000000" stroke="#000000" stroke-width="0.2" textLength="59.0" lengthAdjust="spacingAndGlyphs">ジッタを表示</text>
<rect x="584" y="340" width="13" height="13" fill="#ffffff"/>
<rect x="584" y="340" width="12" height="1" fill="#808080"/>
<rect x="584" y="340" width="1" height="12" fill="#808080"/>
<rect x="584" y="352" width="13" height="1" fill="#ffffff"/>
<rect x="596" y="340" width="1" height="13" fill="#ffffff"/>
<rect x="585" y="341" width="10" height="1" fill="#000000"/>
<rect x="585" y="341" width="1" height="10" fill="#000000"/>
<rect x="585" y="351" width="11" height="1" fill="#c0c0c0"/>
<rect x="595" y="341" width="1" height="11" fill="#c0c0c0"/>
<rect x="593" y="343" width="1" height="1" fill="#000000"/>
<rect x="592" y="344" width="1" height="1" fill="#000000"/>
<rect x="593" y="344" width="1" height="1" fill="#000000"/>
<rect x="587" y="345" width="1" height="1" fill="#000000"/>
<rect x="591" y="345" width="1" height="1" fill="#000000"/>
<rect x="592" y="345" width="1" height="1" fill="#000000"/>
<rect x="593" y="345" width="1" height="1" fill="#000000"/>
<rect x="587" y="346" width="1" height="1" fill="#000000"/>
<rect x="588" y="346" width="1" height="1" fill="#000000"/>
<rect x="590" y="346" width="1" height="1" fill="#000000"/>
<rect x="591" y="346" width="1" height="1" fill="#000000"/>
<rect x="592" y="346" width="1" height="1" fill="#000000"/>
<rect x="587" y="347" width="1" height="1" fill="#000000"/>
<rect x="588" y="347" width="1" height="1" fill="#000000"/>
<rect x="589" y="347" width="1" height="1" fill="#000000"/>
<rect x="590" y="347" width="1" height="1" fill="#000000"/>
<rect x="591" y="347" width="1" height="1" fill="#000000"/>
<rect x="588" y="348" width="1" height="1" fill="#000000"/>
<rect x="589" y="348" width="1" height="1" fill="#000000"/>
<rect x="590" y="348" width="1" height="1" fill="#000000"/>
<rect x="589" y="349" width="1" height="1" fill="#000000"/>
<text x="602" y="349.4" font-size="12" fill="#000000" stroke="#000000" stroke-width="0.2" textLength="81.0" lengthAdjust="spacingAndGlyphs">読込速度を表示</text>
<rect x="584" y="354" width="13" height="13" fill="#c0c0c0"/>
<rect x="584" y="354" width="12" height="1" fill="#808080"/>
<rect x="584" y="354" width="1" height="12" fill="#808080"/>
<rect x="584" y="366" width="13" height="1" fill="#ffffff"/>
<rect x="596" y="354" width="1" height="13" fill="#ffffff"/>
<rect x="585" y="355" width="10" height="1" fill="#000000"/>
<rect x="585" y="355" width="1" height="10" fill="#000000"/>
<rect x="585" y="365" width="11" height="1" fill="#c0c0c0"/>
<rect x="595" y="355" width="1" height="11" fill="#c0c0c0"/>
<rect x="593" y="357" width="1" height="1" fill="#808080"/>
<rect x="592" y="358" width="1" height="1" fill="#808080"/>
<rect x="593" y="358" width="1" height="1" fill="#808080"/>
<rect x="587" y="359" width="1" height="1" fill="#808080"/>
<rect x="591" y="359" width="1" height="1" fill="#808080"/>
<rect x="592" y="359" width="1" height="1" fill="#808080"/>
<rect x="593" y="359" width="1" height="1" fill="#808080"/>
<rect x="587" y="360" width="1" height="1" fill="#808080"/>
<rect x="588" y="360" width="1" height="1" fill="#808080"/>
<rect x="590" y="360" width="1" height="1" fill="#808080"/>
<rect x="591" y="360" width="1" height="1" fill="#808080"/>
<rect x="592" y="360" width="1" height="1" fill="#808080"/>
<rect x="587" y="361" width="1" height="1" fill="#808080"/>
<rect x="588" y="361" width="1" height="1" fill="#808080"/>
<rect x="589" y="361" width="1" height="1" fill="#808080"/>
<rect x="590" y="361" width="1" height="1" fill="#808080"/>
<rect x="591" y="361" width="1" height="1" fill="#808080"/>
<rect x="588" y="362" width="1" height="1" fill="#808080"/>
<rect x="589" y="362" width="1" height="1" fill="#808080"/>
<rect x="590" y="362" width="1" height="1" fill="#808080"/>
<rect x="589" y="363" width="1" height="1" fill="#808080"/>
<text x="603" y="364.4" font-size="12" fill="#ffffff" stroke="#ffffff" stroke-width="0.2" textLength="81.0" lengthAdjust="spacingAndGlyphs">書込速度を表示</text>
<text x="602" y="363.4" font-size="12" fill="#808080" stroke="#808080" stroke-width="0.2" textLength="81.0" lengthAdjust="spacingAndGlyphs">書込速度を表示</text>
<rect x="640" y="369" width="88" height="21" fill="#c0c0c0"/>
<rect x="640" y="369" width="87" height="1" fill="#ffffff"/>
<rect x="640" y="369" width="1" height="20" fill="#ffffff"/>
<rect x="640" y="389" width="88" height="1" fill="#000000"/>
<rect x="727" y="369" width="1" height="21" fill="#000000"/>
<rect x="641" y="370" width="85" height="1" fill="#c0c0c0"/>
<rect x="641" y="370" width="1" height="18" fill="#c0c0c0"/>
<rect x="641" y="388" width="86" height="1" fill="#808080"/>
<rect x="726" y="370" width="1" height="19" fill="#808080"/>
<text x="672" y="382.9" font-size="12" fill="#000000" stroke="#000000" stroke-width="0.2" textLength="24.5" lengthAdjust="spacingAndGlyphs">拡張</text>
<rect x="572" y="399" width="162" height="1" fill="#808080"/>
<rect x="572" y="399" width="1" height="22" fill="#808080"/>
<rect x="572" y="420" width="162" height="1" fill="#808080"/>
<rect x="733" y="399" width="1" height="22" fill="#808080"/>
<rect x="573" y="400" width="162" height="1" fill="#ffffff"/>
<rect x="573" y="400" width="1" height="22" fill="#ffffff"/>
<rect x="572" y="421" width="163" height="1" fill="#ffffff"/>
<rect x="734" y="399" width="1" height="23" fill="#ffffff"/>
<rect x="573" y="420" width="160" height="1" fill="#808080"/>
<rect x="733" y="400" width="1" height="21" fill="#808080"/>
<text x="584" y="414.9" font-size="12" fill="#000000" stroke="#000000" stroke-width="0.2" textLength="53.5" lengthAdjust="spacingAndGlyphs">品質スコア:</text>
<text x="723.1" y="414.5" font-size="12.7" fill="#000080" text-anchor="end" textLength="11.3" lengthAdjust="spacingAndGlyphs">70</text>
<rect x="572" y="429" width="162" height="1" fill="#808080"/>
<rect x="572" y="429" width="1" height="52" fill="#808080"/>
<rect x="572" y="480" width="162" height="1" fill="#808080"/>
<rect x="733" y="429" width="1" height="52" fill="#808080"/>
<rect x="573" y="430" width="162" height="1" fill="#ffffff"/>
<rect x="573" y="430" width="1" height="52" fill="#ffffff"/>
<rect x="572" y="481" width="163" height="1" fill="#ffffff"/>
<rect x="734" y="429" width="1" height="53" fill="#ffffff"/>
<rect x="573" y="480" width="160" height="1" fill="#808080"/>
<rect x="733" y="430" width="1" height="51" fill="#808080"/>
<text x="584" y="446.9" font-size="12" fill="#000000" stroke="#000000" stroke-width="0.2" textLength="50.5" lengthAdjust="spacingAndGlyphs">進行状況:</text>
<text x="584" y="461.4" font-size="12" fill="#000000" stroke="#000000" stroke-width="0.2" textLength="47.5" lengthAdjust="spacingAndGlyphs">ポジション:</text>
<text x="584" y="475.4" font-size="12" fill="#000000" stroke="#000000" stroke-width="0.2" textLength="26.5" lengthAdjust="spacingAndGlyphs">速度:</text>
<text x="723.3" y="447" font-size="12.7" fill="#000080" text-anchor="end" textLength="30" lengthAdjust="spacingAndGlyphs">100 %</text>
<text x="722" y="462" font-size="12.7" fill="#000080" text-anchor="end" textLength="44.7" lengthAdjust="spacingAndGlyphs">4420 MB</text>
<text x="723" y="475.5" font-size="12.7" fill="#000080" text-anchor="end" textLength="32.3" lengthAdjust="spacingAndGlyphs">8.26 X</text>
<rect x="15" y="429" width="170" height="1" fill="#808080"/>
<rect x="15" y="429" width="1" height="52" fill="#808080"/>
<rect x="15" y="480" width="170" height="1" fill="#808080"/>
<rect x="184" y="429" width="1" height="52" fill="#808080"/>
<rect x="16" y="430" width="170" height="1" fill="#ffffff"/>
<rect x="16" y="430" width="1" height="52" fill="#ffffff"/>
<rect x="15" y="481" width="171" height="1" fill="#ffffff"/>
<rect x="185" y="429" width="1" height="53" fill="#ffffff"/>
<rect x="16" y="480" width="168" height="1" fill="#808080"/>
<rect x="184" y="430" width="1" height="51" fill="#808080"/>
<rect x="22" y="429" width="65" height="2" fill="#c0c0c0"/>
<rect x="25" y="426" width="8" height="8" fill="#000000"/>
<rect x="26" y="427" width="6" height="6" fill="#00ffff"/>
<text x="37" y="433" font-size="12.7" fill="#000000" textLength="46.0" lengthAdjust="spacingAndGlyphs">PI Errors</text>
<rect x="199" y="429" width="170" height="1" fill="#808080"/>
<rect x="199" y="429" width="1" height="52" fill="#808080"/>
<rect x="199" y="480" width="170" height="1" fill="#808080"/>
<rect x="368" y="429" width="1" height="52" fill="#808080"/>
<rect x="200" y="430" width="170" height="1" fill="#ffffff"/>
<rect x="200" y="430" width="1" height="52" fill="#ffffff"/>
<rect x="199" y="481" width="171" height="1" fill="#ffffff"/>
<rect x="369" y="429" width="1" height="53" fill="#ffffff"/>
<rect x="200" y="480" width="168" height="1" fill="#808080"/>
<rect x="368" y="430" width="1" height="51" fill="#808080"/>
<rect x="206" y="429" width="75" height="2" fill="#c0c0c0"/>
<rect x="209" y="426" width="8" height="8" fill="#000000"/>
<rect x="210" y="427" width="6" height="6" fill="#ffff00"/>
<text x="221" y="433" font-size="12.7" fill="#000000" textLength="55.5" lengthAdjust="spacingAndGlyphs">PI Failures</text>
<rect x="384" y="429" width="171" height="1" fill="#808080"/>
<rect x="384" y="429" width="1" height="39" fill="#808080"/>
<rect x="384" y="467" width="171" height="1" fill="#808080"/>
<rect x="554" y="429" width="1" height="39" fill="#808080"/>
<rect x="385" y="430" width="171" height="1" fill="#ffffff"/>
<rect x="385" y="430" width="1" height="39" fill="#ffffff"/>
<rect x="384" y="468" width="172" height="1" fill="#ffffff"/>
<rect x="555" y="429" width="1" height="40" fill="#ffffff"/>
<rect x="385" y="467" width="169" height="1" fill="#808080"/>
<rect x="554" y="430" width="1" height="38" fill="#808080"/>
<rect x="391" y="429" width="43" height="2" fill="#c0c0c0"/>
<rect x="394" y="426" width="8" height="8" fill="#000000"/>
<rect x="395" y="427" width="6" height="6" fill="#ff00ff"/>
<text x="405" y="432.9" font-size="12" fill="#000000" stroke="#000000" stroke-width="0.2" textLength="27.5" lengthAdjust="spacingAndGlyphs">ジッタ</text>
<text x="23" y="446.9" font-size="12" fill="#000000" stroke="#000000" stroke-width="0.2" textLength="28.5" lengthAdjust="spacingAndGlyphs">平均:</text>
<text x="23" y="460.9" font-size="12" fill="#000000" stroke="#000000" stroke-width="0.2" textLength="28.5" lengthAdjust="spacingAndGlyphs">最大:</text>
<text x="23" y="474.9" font-size="12" fill="#000000" stroke="#000000" stroke-width="0.2" textLength="30.5" lengthAdjust="spacingAndGlyphs">合計 :</text>
<text x="172.8" y="448" font-size="12.7" fill="#000080" text-anchor="end" textLength="20" lengthAdjust="spacingAndGlyphs">1.16</text>
<text x="172.8" y="461.5" font-size="12.7" fill="#000080" text-anchor="end" textLength="13" lengthAdjust="spacingAndGlyphs">13</text>
<text x="172.8" y="475.5" font-size="12.7" fill="#000080" text-anchor="end" textLength="30" lengthAdjust="spacingAndGlyphs">20595</text>
<text x="208" y="446.9" font-size="12" fill="#000000" stroke="#000000" stroke-width="0.2" textLength="28.5" lengthAdjust="spacingAndGlyphs">平均:</text>
<text x="208" y="460.9" font-size="12" fill="#000000" stroke="#000000" stroke-width="0.2" textLength="28.5" lengthAdjust="spacingAndGlyphs">最大:</text>
<text x="208" y="474.9" font-size="12" fill="#000000" stroke="#000000" stroke-width="0.2" textLength="30.5" lengthAdjust="spacingAndGlyphs">合計 :</text>
<text x="356.5" y="448" font-size="12.7" fill="#000080" text-anchor="end" textLength="19.2" lengthAdjust="spacingAndGlyphs">0.01</text>
<text x="356.5" y="461.5" font-size="12.7" fill="#000080" text-anchor="end">7</text>
<text x="356.5" y="475.5" font-size="12.7" fill="#000080" text-anchor="end" textLength="22.6" lengthAdjust="spacingAndGlyphs">2039</text>
<text x="395" y="446.9" font-size="12" fill="#000000" stroke="#000000" stroke-width="0.2" textLength="28.5" lengthAdjust="spacingAndGlyphs">平均:</text>
<text x="395" y="460.9" font-size="12" fill="#000000" stroke="#000000" stroke-width="0.2" textLength="28.5" lengthAdjust="spacingAndGlyphs">最大:</text>
<text x="545.1" y="448" font-size="12.7" fill="#000080" text-anchor="end" textLength="37.7" lengthAdjust="spacingAndGlyphs">10.02 %</text>
<text x="545.1" y="462" font-size="12.7" fill="#000080" text-anchor="end" textLength="31.7" lengthAdjust="spacingAndGlyphs">10.7 %</text>
<text x="395.5" y="479.9" font-size="12" fill="#000000" stroke="#000000" stroke-width="0.2" textLength="55.5" lengthAdjust="spacingAndGlyphs">PO フェイル:</text>
<rect x="538" y="476" width="5" height="1" fill="#000080"/>
</svg>
</body></html>
